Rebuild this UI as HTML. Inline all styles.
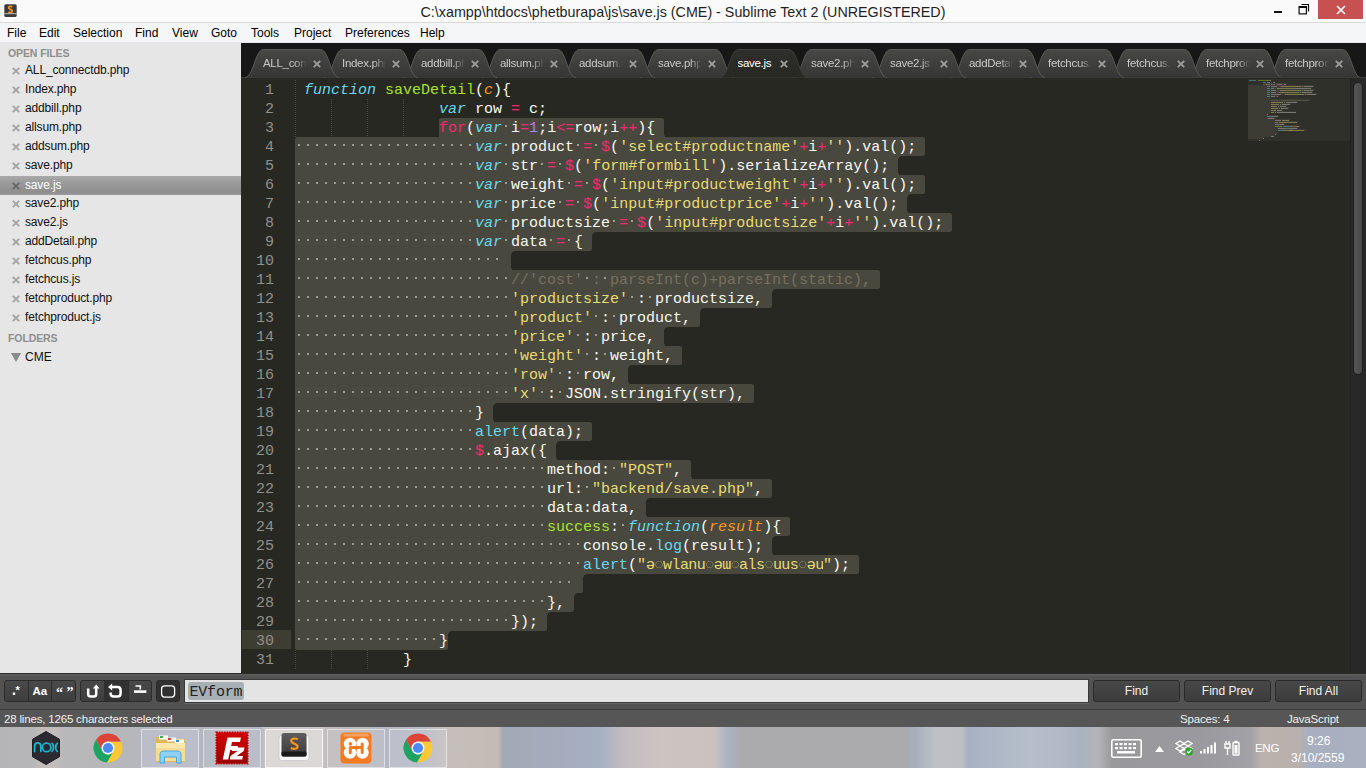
<!DOCTYPE html>
<html><head><meta charset="utf-8">
<style>
*{margin:0;padding:0;box-sizing:border-box}
html,body{width:1366px;height:768px;overflow:hidden;background:#272822;font-family:"Liberation Sans",sans-serif;position:relative}
svg{position:absolute;overflow:visible}
#title{position:absolute;left:0;top:0;width:1366px;height:23px;background:#fafafa;border-bottom:1px solid #d9d9d9}
#title .t{position:absolute;left:0;width:1366px;top:4px;text-align:center;font-size:14.3px;color:#1f1f1f;white-space:nowrap}
#menu{position:absolute;left:0;top:23px;width:1366px;height:20px;background:#f5f6f7;border-bottom:1px solid #e6e7e8}
.mi{position:absolute;top:3px;font-size:12px;color:#000}
#side{position:absolute;left:0;top:43px;width:241px;height:632px;background:#e6e6e6}
.sh{position:absolute;left:8px;font-size:10.5px;color:#8e8e8e;font-weight:bold;letter-spacing:-0.1px}
.fi{position:absolute;left:0;width:241px;height:19px;font-size:12px;color:#111;padding-left:25px;line-height:19px;letter-spacing:-0.15px;white-space:nowrap}
.fi.on{background:linear-gradient(#a9a9a9,#999 40%,#8e8e8e 85%,#9c9c9c);color:#fff}
#tabbar{position:absolute;left:241px;top:43px;width:1125px;height:34px;background:#171717}
.tab{position:absolute;top:49px;width:94px;height:29px}
.tab svg{left:0;top:0}
.tl{position:absolute;left:18px;top:8px;width:44px;overflow:hidden;white-space:nowrap;font-size:11.5px;color:#c8c8c8;letter-spacing:-0.3px;
 -webkit-mask-image:linear-gradient(90deg,#000 72%,transparent 100%);mask-image:linear-gradient(90deg,#000 72%,transparent 100%)}
.tab.act .tl{color:#fff;-webkit-mask-image:none;mask-image:none}
#editor{position:absolute;left:241px;top:77px;width:1125px;height:597px;background:#272822;overflow:hidden}
#codewrap{position:absolute;left:-241px;top:-77px;width:1366px;height:768px}
.ln{position:absolute;left:295px;height:19px;line-height:19px;font-family:"Liberation Mono",monospace;font-size:15px;color:#f8f8f2;white-space:pre}
.sel{position:absolute;height:19px;background:#49483e}
.ig{position:absolute;width:1px;background:repeating-linear-gradient(#4a4a41 0 1px,transparent 1px 2px)}
.dt{position:absolute;width:2px;height:2px;background:#9d9c8f}
.k{color:#66d9ef;font-style:italic}
.c{color:#f92672}
.o{color:#f92672}
.n{color:#ae81ff}
.s{color:#e6db74}
.f{color:#a6e22e}
.p{color:#fd971f;font-style:italic}
.b{color:#66d9ef}
.cm{color:#75715e}
.th{display:inline-block;width:177px;letter-spacing:-0.55px;overflow:hidden;vertical-align:top}
.th i{font-style:normal;opacity:.8}
.gn{position:absolute;left:241px;width:33px;height:19px;line-height:19px;text-align:right;font-family:"Liberation Mono",monospace;font-size:15px;color:#8f908a}
.gcur{position:absolute;left:242px;width:49px;height:19px;background:#3e3d32}
#minimap{position:absolute;left:1248px;top:79px;width:102px;height:62px;background:#2f302a}
.mm{position:absolute;height:1px;opacity:.38}
#sbtrack{position:absolute;left:1350px;top:77px;width:16px;height:598px;background:#282828;border-left:1px solid #222}
#sbthumb{position:absolute;left:1353px;top:82px;width:10px;height:293px;background:linear-gradient(90deg,#555,#4a4a4a);border-radius:5px;border:1px solid #1e1e1e}
#find{position:absolute;left:0;top:673px;width:1366px;height:37px;background:#525252;border-top:1px solid #2c2c2c;border-bottom:1px solid #3a3a3a;box-shadow:inset 0 2px 0 #5a5a5a}
.fb{position:absolute;height:22px;background:linear-gradient(#494949,#3e3e3e);border:1px solid #2b2b2b;border-radius:3px}
.fbt{position:absolute;top:680px;height:22px;background:linear-gradient(#484848,#3c3c3c);border:1px solid #2a2a2a;border-radius:3px;color:#f0f0f0;font-size:12px;text-align:center;line-height:20px}
.cell{position:absolute;top:0;height:20px;border-right:1px solid #2e2e2e}
.cell.on{background:#313131}
#input{position:absolute;left:184px;top:679px;width:905px;height:24px;background:#e4e4e4;border:1px solid #3a3a3a;box-shadow:0 1px 0 #666}
#input .q{position:absolute;left:3px;top:1.5px;height:18.5px;padding:0 1.5px;background:#a9b0b5;border-radius:3px;font-family:"Liberation Mono",monospace;font-size:15px;line-height:21px;color:#222;letter-spacing:-0.2px}
#status{position:absolute;left:0;top:710px;width:1366px;height:17px;background:#565656;color:#f0f0f0;font-size:11.5px}
#status span{position:absolute;top:3px;white-space:nowrap;letter-spacing:-0.18px}
#task{position:absolute;left:0;top:727px;width:1366px;height:41px;overflow:hidden;
 background:linear-gradient(90deg,#b5b5b7 0px,#b7b6b8 35px,#c2bdbb 40px,#c0bcbb 58px,#b8b7b9 64px,#b6b7bb 130px,#b3b7c0 141px,#b4b8c1 199px,#b1b5be 203px,#b3b7c0 261px,#c9c5c4 265px,#c9c5c4 323px,#bfbab9 327px,#bdb9b9 360px,#b3b8c2 385px,#b5bac5 420px,#c6bfbb 447px,#c5bab5 498px,#a3a8b4 503px,#a6b0c3 600px,#c3bdc0 625px,#cdc3c1 660px,#cbc1bf 715px,#a9b2c4 728px,#abaaad 742px,#abaaac 905px,#a7afbf 915px,#bec0c6 935px,#bdbfc5 962px,#a7b1c3 968px,#b6beca 1030px,#b2bac7 1060px,#a9b2c2 1080px,#b4b4b7 1098px,#99999c 1112px,#9a9a9e 1200px,#a2a1a5 1250px,#bbb2ae 1262px,#b9b0ad 1298px,#a7afc0 1310px,#a9b0c0 1366px)}
.tb{position:absolute;top:2px;height:39px;border:1px solid rgba(255,255,255,.5);background:rgba(235,238,245,.15)}
.tb.act{background:rgba(245,240,238,.45);border-color:rgba(255,255,255,.7)}
.tray{position:absolute;color:#fff;font-size:12px;white-space:nowrap}
</style></head><body>
<div id="title">
<svg style="left:3px;top:3px" width="15" height="15" viewBox="0 0 15 15"><rect x="0" y="0" width="15" height="15" rx="2.5" fill="#fff"/><rect x="1.3" y="1.3" width="12.4" height="12.6" rx="1.5" fill="#3b3b3b"/><rect x="1.3" y="10" width="12.4" height="1.2" fill="#aaa"/><path d="M9.3 3.8 C8 3 5.6 3.1 5.6 4.8 C5.6 6.5 9.3 6.2 9.3 8 C9.3 9.6 6.8 9.7 5.4 8.9" stroke="#f7941d" stroke-width="1.7" fill="none"/></svg>
<div class="t">C:\xampp\htdocs\phetburapa\js\save.js (CME) - Sublime Text 2 (UNREGISTERED)</div>
<div style="position:absolute;left:1274px;top:11px;width:8px;height:2px;background:#111"></div>
<svg style="left:1298px;top:3px" width="12" height="12" viewBox="0 0 12 12"><path d="M3.5 1.5 H10.5 V8.5" stroke="#111" stroke-width="1.2" fill="none"/><rect x="1.1" y="3.6" width="7.3" height="7.3" stroke="#111" stroke-width="1.2" fill="#fafafa"/><rect x="1" y="3.2" width="7.6" height="1.8" fill="#111"/></svg>
<div style="position:absolute;left:1318px;top:0;width:45px;height:19px;background:#c75050"></div>
<svg style="left:1336px;top:5px" width="10" height="10" viewBox="0 0 10 10"><path d="M1 1 L9 9 M9 1 L1 9" stroke="#fff" stroke-width="1.6"/></svg>
</div>
<div id="menu"><span class="mi" style="left:7px">File</span><span class="mi" style="left:39px">Edit</span><span class="mi" style="left:73px">Selection</span><span class="mi" style="left:135px">Find</span><span class="mi" style="left:172px">View</span><span class="mi" style="left:211px">Goto</span><span class="mi" style="left:251px">Tools</span><span class="mi" style="left:294px">Project</span><span class="mi" style="left:345px">Preferences</span><span class="mi" style="left:420px">Help</span></div>
<div id="side">
<div class="sh" style="top:4px">OPEN FILES</div>
<div style="position:absolute;left:0;top:-43px"><div class="fi" style="top:61px"><svg style="left:11.5px;top:5.5px" width="8" height="8" viewBox="0 0 8 8"><path d="M0.8 0.8 L7.2 7.2 M7.2 0.8 L0.8 7.2" stroke="#a3a3a3" stroke-width="1.9"/></svg>ALL_connectdb.php</div>
<div class="fi" style="top:80px"><svg style="left:11.5px;top:5.5px" width="8" height="8" viewBox="0 0 8 8"><path d="M0.8 0.8 L7.2 7.2 M7.2 0.8 L0.8 7.2" stroke="#a3a3a3" stroke-width="1.9"/></svg>Index.php</div>
<div class="fi" style="top:99px"><svg style="left:11.5px;top:5.5px" width="8" height="8" viewBox="0 0 8 8"><path d="M0.8 0.8 L7.2 7.2 M7.2 0.8 L0.8 7.2" stroke="#a3a3a3" stroke-width="1.9"/></svg>addbill.php</div>
<div class="fi" style="top:118px"><svg style="left:11.5px;top:5.5px" width="8" height="8" viewBox="0 0 8 8"><path d="M0.8 0.8 L7.2 7.2 M7.2 0.8 L0.8 7.2" stroke="#a3a3a3" stroke-width="1.9"/></svg>allsum.php</div>
<div class="fi" style="top:137px"><svg style="left:11.5px;top:5.5px" width="8" height="8" viewBox="0 0 8 8"><path d="M0.8 0.8 L7.2 7.2 M7.2 0.8 L0.8 7.2" stroke="#a3a3a3" stroke-width="1.9"/></svg>addsum.php</div>
<div class="fi" style="top:156px"><svg style="left:11.5px;top:5.5px" width="8" height="8" viewBox="0 0 8 8"><path d="M0.8 0.8 L7.2 7.2 M7.2 0.8 L0.8 7.2" stroke="#a3a3a3" stroke-width="1.9"/></svg>save.php</div>
<div class="fi on" style="top:176px"><svg style="left:11.5px;top:5.5px" width="8" height="8" viewBox="0 0 8 8"><path d="M0.8 0.8 L7.2 7.2 M7.2 0.8 L0.8 7.2" stroke="#666" stroke-width="1.9"/></svg>save.js</div>
<div class="fi" style="top:194px"><svg style="left:11.5px;top:5.5px" width="8" height="8" viewBox="0 0 8 8"><path d="M0.8 0.8 L7.2 7.2 M7.2 0.8 L0.8 7.2" stroke="#a3a3a3" stroke-width="1.9"/></svg>save2.php</div>
<div class="fi" style="top:213px"><svg style="left:11.5px;top:5.5px" width="8" height="8" viewBox="0 0 8 8"><path d="M0.8 0.8 L7.2 7.2 M7.2 0.8 L0.8 7.2" stroke="#a3a3a3" stroke-width="1.9"/></svg>save2.js</div>
<div class="fi" style="top:232px"><svg style="left:11.5px;top:5.5px" width="8" height="8" viewBox="0 0 8 8"><path d="M0.8 0.8 L7.2 7.2 M7.2 0.8 L0.8 7.2" stroke="#a3a3a3" stroke-width="1.9"/></svg>addDetail.php</div>
<div class="fi" style="top:251px"><svg style="left:11.5px;top:5.5px" width="8" height="8" viewBox="0 0 8 8"><path d="M0.8 0.8 L7.2 7.2 M7.2 0.8 L0.8 7.2" stroke="#a3a3a3" stroke-width="1.9"/></svg>fetchcus.php</div>
<div class="fi" style="top:270px"><svg style="left:11.5px;top:5.5px" width="8" height="8" viewBox="0 0 8 8"><path d="M0.8 0.8 L7.2 7.2 M7.2 0.8 L0.8 7.2" stroke="#a3a3a3" stroke-width="1.9"/></svg>fetchcus.js</div>
<div class="fi" style="top:289px"><svg style="left:11.5px;top:5.5px" width="8" height="8" viewBox="0 0 8 8"><path d="M0.8 0.8 L7.2 7.2 M7.2 0.8 L0.8 7.2" stroke="#a3a3a3" stroke-width="1.9"/></svg>fetchproduct.php</div>
<div class="fi" style="top:308px"><svg style="left:11.5px;top:5.5px" width="8" height="8" viewBox="0 0 8 8"><path d="M0.8 0.8 L7.2 7.2 M7.2 0.8 L0.8 7.2" stroke="#a3a3a3" stroke-width="1.9"/></svg>fetchproduct.js</div></div>
<div class="sh" style="top:288.5px">FOLDERS</div>
<svg style="left:11px;top:310px" width="10" height="9" viewBox="0 0 10 9"><path d="M0 0 H10 L5 9 Z" fill="#8a8a8a"/></svg>
<div class="fi" style="top:305px;letter-spacing:0">CME</div>
</div>
<div id="tabbar"></div><div style="position:absolute;left:241px;top:77px;width:1125px;height:1px;background:#3a3a37;z-index:30"></div>
<svg width="0" height="0" style="position:absolute"><defs><linearGradient id="tgi" x1="0" y1="0" x2="0" y2="1"><stop offset="0" stop-color="#474744"/><stop offset="1" stop-color="#363634"/></linearGradient><linearGradient id="tga" x1="0" y1="0" x2="0" y2="1"><stop offset="0" stop-color="#2f2f2b"/><stop offset="1" stop-color="#272822"/></linearGradient></defs></svg>
<div class="tab" style="left:245px;z-index:40"><svg width="94" height="29" viewBox="0 0 94 29"><path d="M0 28.5 C8.5 28.5 10 0.5 18.5 0.5 L75.5 0.5 C84 0.5 85.5 28.5 94 28.5 Z" fill="url(#tgi)"/><path d="M0 28.5 C8.5 28.5 10 0.5 18.5 0.5 L75.5 0.5 C84 0.5 85.5 28.5 94 28.5" fill="none" stroke="#5a5a56" stroke-width="1"/></svg><span class="tl">ALL_connectdb.php</span><svg style="left:68px;top:11px" width="8" height="8" viewBox="0 0 8 8"><path d="M0.8 0.8 L7.2 7.2 M7.2 0.8 L0.8 7.2" stroke="#9e9e9e" stroke-width="1.8"/></svg></div>
<div class="tab" style="left:324px;z-index:39"><svg width="94" height="29" viewBox="0 0 94 29"><path d="M0 28.5 C8.5 28.5 10 0.5 18.5 0.5 L75.5 0.5 C84 0.5 85.5 28.5 94 28.5 Z" fill="url(#tgi)"/><path d="M0 28.5 C8.5 28.5 10 0.5 18.5 0.5 L75.5 0.5 C84 0.5 85.5 28.5 94 28.5" fill="none" stroke="#5a5a56" stroke-width="1"/></svg><span class="tl">Index.php</span><svg style="left:68px;top:11px" width="8" height="8" viewBox="0 0 8 8"><path d="M0.8 0.8 L7.2 7.2 M7.2 0.8 L0.8 7.2" stroke="#9e9e9e" stroke-width="1.8"/></svg></div>
<div class="tab" style="left:403px;z-index:38"><svg width="94" height="29" viewBox="0 0 94 29"><path d="M0 28.5 C8.5 28.5 10 0.5 18.5 0.5 L75.5 0.5 C84 0.5 85.5 28.5 94 28.5 Z" fill="url(#tgi)"/><path d="M0 28.5 C8.5 28.5 10 0.5 18.5 0.5 L75.5 0.5 C84 0.5 85.5 28.5 94 28.5" fill="none" stroke="#5a5a56" stroke-width="1"/></svg><span class="tl">addbill.php</span><svg style="left:68px;top:11px" width="8" height="8" viewBox="0 0 8 8"><path d="M0.8 0.8 L7.2 7.2 M7.2 0.8 L0.8 7.2" stroke="#9e9e9e" stroke-width="1.8"/></svg></div>
<div class="tab" style="left:482px;z-index:37"><svg width="94" height="29" viewBox="0 0 94 29"><path d="M0 28.5 C8.5 28.5 10 0.5 18.5 0.5 L75.5 0.5 C84 0.5 85.5 28.5 94 28.5 Z" fill="url(#tgi)"/><path d="M0 28.5 C8.5 28.5 10 0.5 18.5 0.5 L75.5 0.5 C84 0.5 85.5 28.5 94 28.5" fill="none" stroke="#5a5a56" stroke-width="1"/></svg><span class="tl">allsum.php</span><svg style="left:68px;top:11px" width="8" height="8" viewBox="0 0 8 8"><path d="M0.8 0.8 L7.2 7.2 M7.2 0.8 L0.8 7.2" stroke="#9e9e9e" stroke-width="1.8"/></svg></div>
<div class="tab" style="left:561px;z-index:36"><svg width="94" height="29" viewBox="0 0 94 29"><path d="M0 28.5 C8.5 28.5 10 0.5 18.5 0.5 L75.5 0.5 C84 0.5 85.5 28.5 94 28.5 Z" fill="url(#tgi)"/><path d="M0 28.5 C8.5 28.5 10 0.5 18.5 0.5 L75.5 0.5 C84 0.5 85.5 28.5 94 28.5" fill="none" stroke="#5a5a56" stroke-width="1"/></svg><span class="tl">addsum.php</span><svg style="left:68px;top:11px" width="8" height="8" viewBox="0 0 8 8"><path d="M0.8 0.8 L7.2 7.2 M7.2 0.8 L0.8 7.2" stroke="#9e9e9e" stroke-width="1.8"/></svg></div>
<div class="tab" style="left:640px;z-index:35"><svg width="94" height="29" viewBox="0 0 94 29"><path d="M0 28.5 C8.5 28.5 10 0.5 18.5 0.5 L75.5 0.5 C84 0.5 85.5 28.5 94 28.5 Z" fill="url(#tgi)"/><path d="M0 28.5 C8.5 28.5 10 0.5 18.5 0.5 L75.5 0.5 C84 0.5 85.5 28.5 94 28.5" fill="none" stroke="#5a5a56" stroke-width="1"/></svg><span class="tl">save.php</span><svg style="left:68px;top:11px" width="8" height="8" viewBox="0 0 8 8"><path d="M0.8 0.8 L7.2 7.2 M7.2 0.8 L0.8 7.2" stroke="#9e9e9e" stroke-width="1.8"/></svg></div>
<div class="tab act" style="left:719.5px;z-index:50"><svg width="87.5" height="29" viewBox="0 0 87.5 29"><path d="M0 28.5 C8.5 28.5 10 0.5 18.5 0.5 L69.0 0.5 C77.5 0.5 79.0 28.5 87.5 28.5 Z" fill="url(#tga)"/><path d="M0 28.5 C8.5 28.5 10 0.5 18.5 0.5 L69.0 0.5 C77.5 0.5 79.0 28.5 87.5 28.5" fill="none" stroke="#3e3e3a" stroke-width="1"/></svg><span class="tl">save.js</span><svg style="left:60px;top:11px" width="8" height="8" viewBox="0 0 8 8"><path d="M0.8 0.8 L7.2 7.2 M7.2 0.8 L0.8 7.2" stroke="#9e9e9e" stroke-width="1.8"/></svg></div>
<div class="tab" style="left:793px;z-index:33"><svg width="94" height="29" viewBox="0 0 94 29"><path d="M0 28.5 C8.5 28.5 10 0.5 18.5 0.5 L75.5 0.5 C84 0.5 85.5 28.5 94 28.5 Z" fill="url(#tgi)"/><path d="M0 28.5 C8.5 28.5 10 0.5 18.5 0.5 L75.5 0.5 C84 0.5 85.5 28.5 94 28.5" fill="none" stroke="#5a5a56" stroke-width="1"/></svg><span class="tl">save2.php</span><svg style="left:68px;top:11px" width="8" height="8" viewBox="0 0 8 8"><path d="M0.8 0.8 L7.2 7.2 M7.2 0.8 L0.8 7.2" stroke="#9e9e9e" stroke-width="1.8"/></svg></div>
<div class="tab" style="left:872px;z-index:32"><svg width="94" height="29" viewBox="0 0 94 29"><path d="M0 28.5 C8.5 28.5 10 0.5 18.5 0.5 L75.5 0.5 C84 0.5 85.5 28.5 94 28.5 Z" fill="url(#tgi)"/><path d="M0 28.5 C8.5 28.5 10 0.5 18.5 0.5 L75.5 0.5 C84 0.5 85.5 28.5 94 28.5" fill="none" stroke="#5a5a56" stroke-width="1"/></svg><span class="tl">save2.js</span><svg style="left:68px;top:11px" width="8" height="8" viewBox="0 0 8 8"><path d="M0.8 0.8 L7.2 7.2 M7.2 0.8 L0.8 7.2" stroke="#9e9e9e" stroke-width="1.8"/></svg></div>
<div class="tab" style="left:951px;z-index:31"><svg width="94" height="29" viewBox="0 0 94 29"><path d="M0 28.5 C8.5 28.5 10 0.5 18.5 0.5 L75.5 0.5 C84 0.5 85.5 28.5 94 28.5 Z" fill="url(#tgi)"/><path d="M0 28.5 C8.5 28.5 10 0.5 18.5 0.5 L75.5 0.5 C84 0.5 85.5 28.5 94 28.5" fill="none" stroke="#5a5a56" stroke-width="1"/></svg><span class="tl">addDetail.php</span><svg style="left:68px;top:11px" width="8" height="8" viewBox="0 0 8 8"><path d="M0.8 0.8 L7.2 7.2 M7.2 0.8 L0.8 7.2" stroke="#9e9e9e" stroke-width="1.8"/></svg></div>
<div class="tab" style="left:1030px;z-index:30"><svg width="94" height="29" viewBox="0 0 94 29"><path d="M0 28.5 C8.5 28.5 10 0.5 18.5 0.5 L75.5 0.5 C84 0.5 85.5 28.5 94 28.5 Z" fill="url(#tgi)"/><path d="M0 28.5 C8.5 28.5 10 0.5 18.5 0.5 L75.5 0.5 C84 0.5 85.5 28.5 94 28.5" fill="none" stroke="#5a5a56" stroke-width="1"/></svg><span class="tl">fetchcus.php</span><svg style="left:68px;top:11px" width="8" height="8" viewBox="0 0 8 8"><path d="M0.8 0.8 L7.2 7.2 M7.2 0.8 L0.8 7.2" stroke="#9e9e9e" stroke-width="1.8"/></svg></div>
<div class="tab" style="left:1109px;z-index:29"><svg width="94" height="29" viewBox="0 0 94 29"><path d="M0 28.5 C8.5 28.5 10 0.5 18.5 0.5 L75.5 0.5 C84 0.5 85.5 28.5 94 28.5 Z" fill="url(#tgi)"/><path d="M0 28.5 C8.5 28.5 10 0.5 18.5 0.5 L75.5 0.5 C84 0.5 85.5 28.5 94 28.5" fill="none" stroke="#5a5a56" stroke-width="1"/></svg><span class="tl">fetchcus.js</span><svg style="left:68px;top:11px" width="8" height="8" viewBox="0 0 8 8"><path d="M0.8 0.8 L7.2 7.2 M7.2 0.8 L0.8 7.2" stroke="#9e9e9e" stroke-width="1.8"/></svg></div>
<div class="tab" style="left:1188px;z-index:28"><svg width="94" height="29" viewBox="0 0 94 29"><path d="M0 28.5 C8.5 28.5 10 0.5 18.5 0.5 L75.5 0.5 C84 0.5 85.5 28.5 94 28.5 Z" fill="url(#tgi)"/><path d="M0 28.5 C8.5 28.5 10 0.5 18.5 0.5 L75.5 0.5 C84 0.5 85.5 28.5 94 28.5" fill="none" stroke="#5a5a56" stroke-width="1"/></svg><span class="tl">fetchproduct.php</span><svg style="left:68px;top:11px" width="8" height="8" viewBox="0 0 8 8"><path d="M0.8 0.8 L7.2 7.2 M7.2 0.8 L0.8 7.2" stroke="#9e9e9e" stroke-width="1.8"/></svg></div>
<div class="tab" style="left:1267px;z-index:27"><svg width="94" height="29" viewBox="0 0 94 29"><path d="M0 28.5 C8.5 28.5 10 0.5 18.5 0.5 L75.5 0.5 C84 0.5 85.5 28.5 94 28.5 Z" fill="url(#tgi)"/><path d="M0 28.5 C8.5 28.5 10 0.5 18.5 0.5 L75.5 0.5 C84 0.5 85.5 28.5 94 28.5" fill="none" stroke="#5a5a56" stroke-width="1"/></svg><span class="tl">fetchproduct.js</span><svg style="left:68px;top:11px" width="8" height="8" viewBox="0 0 8 8"><path d="M0.8 0.8 L7.2 7.2 M7.2 0.8 L0.8 7.2" stroke="#9e9e9e" stroke-width="1.8"/></svg></div>
<div id="editor"><div id="codewrap">
<div class="gcur" style="top:630px"></div>
<div class="gn" style="top:81px">1</div>
<div class="gn" style="top:100px">2</div>
<div class="gn" style="top:119px">3</div>
<div class="gn" style="top:138px">4</div>
<div class="gn" style="top:157px">5</div>
<div class="gn" style="top:176px">6</div>
<div class="gn" style="top:195px">7</div>
<div class="gn" style="top:214px">8</div>
<div class="gn" style="top:233px">9</div>
<div class="gn" style="top:252px">10</div>
<div class="gn" style="top:271px">11</div>
<div class="gn" style="top:290px">12</div>
<div class="gn" style="top:309px">13</div>
<div class="gn" style="top:328px">14</div>
<div class="gn" style="top:347px">15</div>
<div class="gn" style="top:366px">16</div>
<div class="gn" style="top:385px">17</div>
<div class="gn" style="top:404px">18</div>
<div class="gn" style="top:423px">19</div>
<div class="gn" style="top:442px">20</div>
<div class="gn" style="top:461px">21</div>
<div class="gn" style="top:480px">22</div>
<div class="gn" style="top:499px">23</div>
<div class="gn" style="top:518px">24</div>
<div class="gn" style="top:537px">25</div>
<div class="gn" style="top:556px">26</div>
<div class="gn" style="top:575px">27</div>
<div class="gn" style="top:594px">28</div>
<div class="gn" style="top:613px">29</div>
<div class="gn" style="top:632px">30</div>
<div class="gn" style="top:651px">31</div>
<div class="gn" style="top:670px">32</div>
<div class="sel" style="left:439px;top:118px;width:225px;border-radius:2.5px 2.5px 0px 0px"></div>
<div class="sel" style="left:295px;top:137px;width:630px;border-radius:2.5px 2.5px 2.5px 0px"></div>
<div class="sel" style="left:295px;top:156px;width:603px;border-radius:0px 0px 0px 0px"></div>
<div class="sel" style="left:295px;top:175px;width:630px;border-radius:0px 2.5px 2.5px 0px"></div>
<div class="sel" style="left:295px;top:194px;width:612px;border-radius:0px 0px 0px 0px"></div>
<div class="sel" style="left:295px;top:213px;width:657px;border-radius:0px 2.5px 2.5px 0px"></div>
<div class="sel" style="left:295px;top:232px;width:297px;border-radius:0px 0px 2.5px 0px"></div>
<div class="sel" style="left:295px;top:251px;width:216px;border-radius:0px 0px 0px 0px"></div>
<div class="sel" style="left:295px;top:270px;width:585px;border-radius:0px 2.5px 2.5px 0px"></div>
<div class="sel" style="left:295px;top:289px;width:477px;border-radius:0px 0px 2.5px 0px"></div>
<div class="sel" style="left:295px;top:308px;width:405px;border-radius:0px 0px 2.5px 0px"></div>
<div class="sel" style="left:295px;top:327px;width:369px;border-radius:0px 0px 0px 0px"></div>
<div class="sel" style="left:295px;top:346px;width:387px;border-radius:0px 2.5px 2.5px 0px"></div>
<div class="sel" style="left:295px;top:365px;width:333px;border-radius:0px 0px 0px 0px"></div>
<div class="sel" style="left:295px;top:384px;width:459px;border-radius:0px 2.5px 2.5px 0px"></div>
<div class="sel" style="left:295px;top:403px;width:198px;border-radius:0px 0px 0px 0px"></div>
<div class="sel" style="left:295px;top:422px;width:297px;border-radius:0px 2.5px 2.5px 0px"></div>
<div class="sel" style="left:295px;top:441px;width:261px;border-radius:0px 0px 0px 0px"></div>
<div class="sel" style="left:295px;top:460px;width:396px;border-radius:0px 2.5px 0px 0px"></div>
<div class="sel" style="left:295px;top:479px;width:477px;border-radius:0px 2.5px 2.5px 0px"></div>
<div class="sel" style="left:295px;top:498px;width:351px;border-radius:0px 0px 0px 0px"></div>
<div class="sel" style="left:295px;top:517px;width:495px;border-radius:0px 2.5px 2.5px 0px"></div>
<div class="sel" style="left:295px;top:536px;width:477px;border-radius:0px 0px 0px 0px"></div>
<div class="sel" style="left:295px;top:555px;width:564px;border-radius:0px 2.5px 2.5px 0px"></div>
<div class="sel" style="left:295px;top:574px;width:288px;border-radius:0px 0px 2.5px 0px"></div>
<div class="sel" style="left:295px;top:593px;width:279px;border-radius:0px 0px 2.5px 0px"></div>
<div class="sel" style="left:295px;top:612px;width:252px;border-radius:0px 0px 2.5px 0px"></div>
<div class="sel" style="left:295px;top:631px;width:153px;border-radius:0px 0px 2.5px 2.5px"></div>
<div style="position:absolute;left:664px;top:134.5px;width:2.5px;height:2.5px;background:radial-gradient(circle at 100% 0, transparent 2.2px, #49483e 2.8px)"></div>
<div style="position:absolute;left:436.5px;top:134.5px;width:2.5px;height:2.5px;background:radial-gradient(circle at 0 0, transparent 2.2px, #49483e 2.8px)"></div>
<div style="position:absolute;left:898px;top:156px;width:2.5px;height:2.5px;background:radial-gradient(circle at 100% 100%, transparent 2.2px, #49483e 2.8px)"></div>
<div style="position:absolute;left:898px;top:172.5px;width:2.5px;height:2.5px;background:radial-gradient(circle at 100% 0, transparent 2.2px, #49483e 2.8px)"></div>
<div style="position:absolute;left:907px;top:194px;width:2.5px;height:2.5px;background:radial-gradient(circle at 100% 100%, transparent 2.2px, #49483e 2.8px)"></div>
<div style="position:absolute;left:907px;top:210.5px;width:2.5px;height:2.5px;background:radial-gradient(circle at 100% 0, transparent 2.2px, #49483e 2.8px)"></div>
<div style="position:absolute;left:592px;top:232px;width:2.5px;height:2.5px;background:radial-gradient(circle at 100% 100%, transparent 2.2px, #49483e 2.8px)"></div>
<div style="position:absolute;left:511px;top:251px;width:2.5px;height:2.5px;background:radial-gradient(circle at 100% 100%, transparent 2.2px, #49483e 2.8px)"></div>
<div style="position:absolute;left:511px;top:267.5px;width:2.5px;height:2.5px;background:radial-gradient(circle at 100% 0, transparent 2.2px, #49483e 2.8px)"></div>
<div style="position:absolute;left:772px;top:289px;width:2.5px;height:2.5px;background:radial-gradient(circle at 100% 100%, transparent 2.2px, #49483e 2.8px)"></div>
<div style="position:absolute;left:700px;top:308px;width:2.5px;height:2.5px;background:radial-gradient(circle at 100% 100%, transparent 2.2px, #49483e 2.8px)"></div>
<div style="position:absolute;left:664px;top:327px;width:2.5px;height:2.5px;background:radial-gradient(circle at 100% 100%, transparent 2.2px, #49483e 2.8px)"></div>
<div style="position:absolute;left:664px;top:343.5px;width:2.5px;height:2.5px;background:radial-gradient(circle at 100% 0, transparent 2.2px, #49483e 2.8px)"></div>
<div style="position:absolute;left:628px;top:365px;width:2.5px;height:2.5px;background:radial-gradient(circle at 100% 100%, transparent 2.2px, #49483e 2.8px)"></div>
<div style="position:absolute;left:628px;top:381.5px;width:2.5px;height:2.5px;background:radial-gradient(circle at 100% 0, transparent 2.2px, #49483e 2.8px)"></div>
<div style="position:absolute;left:493px;top:403px;width:2.5px;height:2.5px;background:radial-gradient(circle at 100% 100%, transparent 2.2px, #49483e 2.8px)"></div>
<div style="position:absolute;left:493px;top:419.5px;width:2.5px;height:2.5px;background:radial-gradient(circle at 100% 0, transparent 2.2px, #49483e 2.8px)"></div>
<div style="position:absolute;left:556px;top:441px;width:2.5px;height:2.5px;background:radial-gradient(circle at 100% 100%, transparent 2.2px, #49483e 2.8px)"></div>
<div style="position:absolute;left:556px;top:457.5px;width:2.5px;height:2.5px;background:radial-gradient(circle at 100% 0, transparent 2.2px, #49483e 2.8px)"></div>
<div style="position:absolute;left:691px;top:476.5px;width:2.5px;height:2.5px;background:radial-gradient(circle at 100% 0, transparent 2.2px, #49483e 2.8px)"></div>
<div style="position:absolute;left:646px;top:498px;width:2.5px;height:2.5px;background:radial-gradient(circle at 100% 100%, transparent 2.2px, #49483e 2.8px)"></div>
<div style="position:absolute;left:646px;top:514.5px;width:2.5px;height:2.5px;background:radial-gradient(circle at 100% 0, transparent 2.2px, #49483e 2.8px)"></div>
<div style="position:absolute;left:772px;top:536px;width:2.5px;height:2.5px;background:radial-gradient(circle at 100% 100%, transparent 2.2px, #49483e 2.8px)"></div>
<div style="position:absolute;left:772px;top:552.5px;width:2.5px;height:2.5px;background:radial-gradient(circle at 100% 0, transparent 2.2px, #49483e 2.8px)"></div>
<div style="position:absolute;left:583px;top:574px;width:2.5px;height:2.5px;background:radial-gradient(circle at 100% 100%, transparent 2.2px, #49483e 2.8px)"></div>
<div style="position:absolute;left:574px;top:593px;width:2.5px;height:2.5px;background:radial-gradient(circle at 100% 100%, transparent 2.2px, #49483e 2.8px)"></div>
<div style="position:absolute;left:547px;top:612px;width:2.5px;height:2.5px;background:radial-gradient(circle at 100% 100%, transparent 2.2px, #49483e 2.8px)"></div>
<div style="position:absolute;left:448px;top:631px;width:2.5px;height:2.5px;background:radial-gradient(circle at 100% 100%, transparent 2.2px, #49483e 2.8px)"></div>
<div class="ig" style="left:295px;top:80px;height:57px"></div>
<div class="ig" style="left:331px;top:99px;height:38px"></div>
<div class="ig" style="left:367px;top:99px;height:38px"></div>
<div class="ig" style="left:403px;top:99px;height:38px"></div>
<div class="ig" style="left:295px;top:650px;height:19px"></div>
<div class="ig" style="left:331px;top:650px;height:19px"></div>
<div class="ig" style="left:367px;top:650px;height:19px"></div>
<div class="ln" style="top:81px"> <span class="k">function</span> <span class="f">saveDetail</span>(<span class="p">c</span>){</div>
<div class="ln" style="top:100px">                <span class="k">var</span> row <span class="o">=</span> c;</div>
<div class="ln" style="top:119px">                <span class="c">for</span>(<span class="k">var</span> i<span class="o">=</span><span class="n">1</span>;i<span class="o">&lt;=</span>row;i<span class="o">++</span>){</div>
<div class="ln" style="top:138px">                    <span class="k">var</span> product <span class="o">=</span> <span class="o">$</span>(<span class="s">&#x27;select#productname&#x27;</span><span class="o">+</span>i<span class="o">+</span><span class="s">&#x27;&#x27;</span>).val();</div>
<div class="ln" style="top:157px">                    <span class="k">var</span> str <span class="o">=</span> <span class="o">$</span>(<span class="s">&#x27;form#formbill&#x27;</span>).serializeArray();</div>
<div class="ln" style="top:176px">                    <span class="k">var</span> weight <span class="o">=</span> <span class="o">$</span>(<span class="s">&#x27;input#productweight&#x27;</span><span class="o">+</span>i<span class="o">+</span><span class="s">&#x27;&#x27;</span>).val();</div>
<div class="ln" style="top:195px">                    <span class="k">var</span> price <span class="o">=</span> <span class="o">$</span>(<span class="s">&#x27;input#productprice&#x27;</span><span class="o">+</span>i<span class="o">+</span><span class="s">&#x27;&#x27;</span>).val();</div>
<div class="ln" style="top:214px">                    <span class="k">var</span> productsize <span class="o">=</span> <span class="o">$</span>(<span class="s">&#x27;input#productsize&#x27;</span><span class="o">+</span>i<span class="o">+</span><span class="s">&#x27;&#x27;</span>).val();</div>
<div class="ln" style="top:233px">                    <span class="k">var</span> data <span class="o">=</span> {</div>
<div class="ln" style="top:252px">                       </div>
<div class="ln" style="top:271px">                        <span class="cm">//&#x27;cost&#x27; : parseInt(c)+parseInt(static),</span></div>
<div class="ln" style="top:290px">                        <span class="s">&#x27;productsize&#x27;</span> : productsize,</div>
<div class="ln" style="top:309px">                        <span class="s">&#x27;product&#x27;</span> : product,</div>
<div class="ln" style="top:328px">                        <span class="s">&#x27;price&#x27;</span> : price,</div>
<div class="ln" style="top:347px">                        <span class="s">&#x27;weight&#x27;</span> : weight,</div>
<div class="ln" style="top:366px">                        <span class="s">&#x27;row&#x27;</span> : row,</div>
<div class="ln" style="top:385px">                        <span class="s">&#x27;x&#x27;</span> : JSON.stringify(str),</div>
<div class="ln" style="top:404px">                    }</div>
<div class="ln" style="top:423px">                    <span class="b">alert</span>(data);</div>
<div class="ln" style="top:442px">                    <span class="o">$</span>.ajax({</div>
<div class="ln" style="top:461px">                            method: <span class="s">&quot;POST&quot;</span>,</div>
<div class="ln" style="top:480px">                            url: <span class="s">&quot;backend/save.php&quot;</span>,</div>
<div class="ln" style="top:499px">                            data<span class="d">:</span>data,</div>
<div class="ln" style="top:518px">                            <span class="f">success</span>: <span class="k">function</span>(<span class="p">result</span>){</div>
<div class="ln" style="top:537px">                                console.<span class="b">log</span>(result);</div>
<div class="ln" style="top:556px">                                <span class="b">alert</span>(<span class="s">"</span><span class="s th">ə<i>◌</i>wlanu<i>◌</i>əɯ<i>◌</i>als<i>◌</i>uus<i>◌</i>əu</span><span class="s">"</span>);</div>
<div class="ln" style="top:575px">                               </div>
<div class="ln" style="top:594px">                            },</div>
<div class="ln" style="top:613px">                        });</div>
<div class="ln" style="top:632px">                }</div>
<div class="ln" style="top:651px">            }</div>
<i class="dt" style="left:505px;top:125px"></i>
<i class="dt" style="left:298px;top:144px"></i>
<i class="dt" style="left:307px;top:144px"></i>
<i class="dt" style="left:316px;top:144px"></i>
<i class="dt" style="left:325px;top:144px"></i>
<i class="dt" style="left:334px;top:144px"></i>
<i class="dt" style="left:343px;top:144px"></i>
<i class="dt" style="left:352px;top:144px"></i>
<i class="dt" style="left:361px;top:144px"></i>
<i class="dt" style="left:370px;top:144px"></i>
<i class="dt" style="left:379px;top:144px"></i>
<i class="dt" style="left:388px;top:144px"></i>
<i class="dt" style="left:397px;top:144px"></i>
<i class="dt" style="left:406px;top:144px"></i>
<i class="dt" style="left:415px;top:144px"></i>
<i class="dt" style="left:424px;top:144px"></i>
<i class="dt" style="left:433px;top:144px"></i>
<i class="dt" style="left:442px;top:144px"></i>
<i class="dt" style="left:451px;top:144px"></i>
<i class="dt" style="left:460px;top:144px"></i>
<i class="dt" style="left:469px;top:144px"></i>
<i class="dt" style="left:505px;top:144px"></i>
<i class="dt" style="left:577px;top:144px"></i>
<i class="dt" style="left:595px;top:144px"></i>
<i class="dt" style="left:298px;top:163px"></i>
<i class="dt" style="left:307px;top:163px"></i>
<i class="dt" style="left:316px;top:163px"></i>
<i class="dt" style="left:325px;top:163px"></i>
<i class="dt" style="left:334px;top:163px"></i>
<i class="dt" style="left:343px;top:163px"></i>
<i class="dt" style="left:352px;top:163px"></i>
<i class="dt" style="left:361px;top:163px"></i>
<i class="dt" style="left:370px;top:163px"></i>
<i class="dt" style="left:379px;top:163px"></i>
<i class="dt" style="left:388px;top:163px"></i>
<i class="dt" style="left:397px;top:163px"></i>
<i class="dt" style="left:406px;top:163px"></i>
<i class="dt" style="left:415px;top:163px"></i>
<i class="dt" style="left:424px;top:163px"></i>
<i class="dt" style="left:433px;top:163px"></i>
<i class="dt" style="left:442px;top:163px"></i>
<i class="dt" style="left:451px;top:163px"></i>
<i class="dt" style="left:460px;top:163px"></i>
<i class="dt" style="left:469px;top:163px"></i>
<i class="dt" style="left:505px;top:163px"></i>
<i class="dt" style="left:541px;top:163px"></i>
<i class="dt" style="left:559px;top:163px"></i>
<i class="dt" style="left:298px;top:182px"></i>
<i class="dt" style="left:307px;top:182px"></i>
<i class="dt" style="left:316px;top:182px"></i>
<i class="dt" style="left:325px;top:182px"></i>
<i class="dt" style="left:334px;top:182px"></i>
<i class="dt" style="left:343px;top:182px"></i>
<i class="dt" style="left:352px;top:182px"></i>
<i class="dt" style="left:361px;top:182px"></i>
<i class="dt" style="left:370px;top:182px"></i>
<i class="dt" style="left:379px;top:182px"></i>
<i class="dt" style="left:388px;top:182px"></i>
<i class="dt" style="left:397px;top:182px"></i>
<i class="dt" style="left:406px;top:182px"></i>
<i class="dt" style="left:415px;top:182px"></i>
<i class="dt" style="left:424px;top:182px"></i>
<i class="dt" style="left:433px;top:182px"></i>
<i class="dt" style="left:442px;top:182px"></i>
<i class="dt" style="left:451px;top:182px"></i>
<i class="dt" style="left:460px;top:182px"></i>
<i class="dt" style="left:469px;top:182px"></i>
<i class="dt" style="left:505px;top:182px"></i>
<i class="dt" style="left:568px;top:182px"></i>
<i class="dt" style="left:586px;top:182px"></i>
<i class="dt" style="left:298px;top:201px"></i>
<i class="dt" style="left:307px;top:201px"></i>
<i class="dt" style="left:316px;top:201px"></i>
<i class="dt" style="left:325px;top:201px"></i>
<i class="dt" style="left:334px;top:201px"></i>
<i class="dt" style="left:343px;top:201px"></i>
<i class="dt" style="left:352px;top:201px"></i>
<i class="dt" style="left:361px;top:201px"></i>
<i class="dt" style="left:370px;top:201px"></i>
<i class="dt" style="left:379px;top:201px"></i>
<i class="dt" style="left:388px;top:201px"></i>
<i class="dt" style="left:397px;top:201px"></i>
<i class="dt" style="left:406px;top:201px"></i>
<i class="dt" style="left:415px;top:201px"></i>
<i class="dt" style="left:424px;top:201px"></i>
<i class="dt" style="left:433px;top:201px"></i>
<i class="dt" style="left:442px;top:201px"></i>
<i class="dt" style="left:451px;top:201px"></i>
<i class="dt" style="left:460px;top:201px"></i>
<i class="dt" style="left:469px;top:201px"></i>
<i class="dt" style="left:505px;top:201px"></i>
<i class="dt" style="left:559px;top:201px"></i>
<i class="dt" style="left:577px;top:201px"></i>
<i class="dt" style="left:298px;top:220px"></i>
<i class="dt" style="left:307px;top:220px"></i>
<i class="dt" style="left:316px;top:220px"></i>
<i class="dt" style="left:325px;top:220px"></i>
<i class="dt" style="left:334px;top:220px"></i>
<i class="dt" style="left:343px;top:220px"></i>
<i class="dt" style="left:352px;top:220px"></i>
<i class="dt" style="left:361px;top:220px"></i>
<i class="dt" style="left:370px;top:220px"></i>
<i class="dt" style="left:379px;top:220px"></i>
<i class="dt" style="left:388px;top:220px"></i>
<i class="dt" style="left:397px;top:220px"></i>
<i class="dt" style="left:406px;top:220px"></i>
<i class="dt" style="left:415px;top:220px"></i>
<i class="dt" style="left:424px;top:220px"></i>
<i class="dt" style="left:433px;top:220px"></i>
<i class="dt" style="left:442px;top:220px"></i>
<i class="dt" style="left:451px;top:220px"></i>
<i class="dt" style="left:460px;top:220px"></i>
<i class="dt" style="left:469px;top:220px"></i>
<i class="dt" style="left:505px;top:220px"></i>
<i class="dt" style="left:613px;top:220px"></i>
<i class="dt" style="left:631px;top:220px"></i>
<i class="dt" style="left:298px;top:239px"></i>
<i class="dt" style="left:307px;top:239px"></i>
<i class="dt" style="left:316px;top:239px"></i>
<i class="dt" style="left:325px;top:239px"></i>
<i class="dt" style="left:334px;top:239px"></i>
<i class="dt" style="left:343px;top:239px"></i>
<i class="dt" style="left:352px;top:239px"></i>
<i class="dt" style="left:361px;top:239px"></i>
<i class="dt" style="left:370px;top:239px"></i>
<i class="dt" style="left:379px;top:239px"></i>
<i class="dt" style="left:388px;top:239px"></i>
<i class="dt" style="left:397px;top:239px"></i>
<i class="dt" style="left:406px;top:239px"></i>
<i class="dt" style="left:415px;top:239px"></i>
<i class="dt" style="left:424px;top:239px"></i>
<i class="dt" style="left:433px;top:239px"></i>
<i class="dt" style="left:442px;top:239px"></i>
<i class="dt" style="left:451px;top:239px"></i>
<i class="dt" style="left:460px;top:239px"></i>
<i class="dt" style="left:469px;top:239px"></i>
<i class="dt" style="left:505px;top:239px"></i>
<i class="dt" style="left:550px;top:239px"></i>
<i class="dt" style="left:568px;top:239px"></i>
<i class="dt" style="left:298px;top:258px"></i>
<i class="dt" style="left:307px;top:258px"></i>
<i class="dt" style="left:316px;top:258px"></i>
<i class="dt" style="left:325px;top:258px"></i>
<i class="dt" style="left:334px;top:258px"></i>
<i class="dt" style="left:343px;top:258px"></i>
<i class="dt" style="left:352px;top:258px"></i>
<i class="dt" style="left:361px;top:258px"></i>
<i class="dt" style="left:370px;top:258px"></i>
<i class="dt" style="left:379px;top:258px"></i>
<i class="dt" style="left:388px;top:258px"></i>
<i class="dt" style="left:397px;top:258px"></i>
<i class="dt" style="left:406px;top:258px"></i>
<i class="dt" style="left:415px;top:258px"></i>
<i class="dt" style="left:424px;top:258px"></i>
<i class="dt" style="left:433px;top:258px"></i>
<i class="dt" style="left:442px;top:258px"></i>
<i class="dt" style="left:451px;top:258px"></i>
<i class="dt" style="left:460px;top:258px"></i>
<i class="dt" style="left:469px;top:258px"></i>
<i class="dt" style="left:478px;top:258px"></i>
<i class="dt" style="left:487px;top:258px"></i>
<i class="dt" style="left:496px;top:258px"></i>
<i class="dt" style="left:298px;top:277px"></i>
<i class="dt" style="left:307px;top:277px"></i>
<i class="dt" style="left:316px;top:277px"></i>
<i class="dt" style="left:325px;top:277px"></i>
<i class="dt" style="left:334px;top:277px"></i>
<i class="dt" style="left:343px;top:277px"></i>
<i class="dt" style="left:352px;top:277px"></i>
<i class="dt" style="left:361px;top:277px"></i>
<i class="dt" style="left:370px;top:277px"></i>
<i class="dt" style="left:379px;top:277px"></i>
<i class="dt" style="left:388px;top:277px"></i>
<i class="dt" style="left:397px;top:277px"></i>
<i class="dt" style="left:406px;top:277px"></i>
<i class="dt" style="left:415px;top:277px"></i>
<i class="dt" style="left:424px;top:277px"></i>
<i class="dt" style="left:433px;top:277px"></i>
<i class="dt" style="left:442px;top:277px"></i>
<i class="dt" style="left:451px;top:277px"></i>
<i class="dt" style="left:460px;top:277px"></i>
<i class="dt" style="left:469px;top:277px"></i>
<i class="dt" style="left:478px;top:277px"></i>
<i class="dt" style="left:487px;top:277px"></i>
<i class="dt" style="left:496px;top:277px"></i>
<i class="dt" style="left:505px;top:277px"></i>
<i class="dt" style="left:586px;top:277px"></i>
<i class="dt" style="left:604px;top:277px"></i>
<i class="dt" style="left:298px;top:296px"></i>
<i class="dt" style="left:307px;top:296px"></i>
<i class="dt" style="left:316px;top:296px"></i>
<i class="dt" style="left:325px;top:296px"></i>
<i class="dt" style="left:334px;top:296px"></i>
<i class="dt" style="left:343px;top:296px"></i>
<i class="dt" style="left:352px;top:296px"></i>
<i class="dt" style="left:361px;top:296px"></i>
<i class="dt" style="left:370px;top:296px"></i>
<i class="dt" style="left:379px;top:296px"></i>
<i class="dt" style="left:388px;top:296px"></i>
<i class="dt" style="left:397px;top:296px"></i>
<i class="dt" style="left:406px;top:296px"></i>
<i class="dt" style="left:415px;top:296px"></i>
<i class="dt" style="left:424px;top:296px"></i>
<i class="dt" style="left:433px;top:296px"></i>
<i class="dt" style="left:442px;top:296px"></i>
<i class="dt" style="left:451px;top:296px"></i>
<i class="dt" style="left:460px;top:296px"></i>
<i class="dt" style="left:469px;top:296px"></i>
<i class="dt" style="left:478px;top:296px"></i>
<i class="dt" style="left:487px;top:296px"></i>
<i class="dt" style="left:496px;top:296px"></i>
<i class="dt" style="left:505px;top:296px"></i>
<i class="dt" style="left:631px;top:296px"></i>
<i class="dt" style="left:649px;top:296px"></i>
<i class="dt" style="left:298px;top:315px"></i>
<i class="dt" style="left:307px;top:315px"></i>
<i class="dt" style="left:316px;top:315px"></i>
<i class="dt" style="left:325px;top:315px"></i>
<i class="dt" style="left:334px;top:315px"></i>
<i class="dt" style="left:343px;top:315px"></i>
<i class="dt" style="left:352px;top:315px"></i>
<i class="dt" style="left:361px;top:315px"></i>
<i class="dt" style="left:370px;top:315px"></i>
<i class="dt" style="left:379px;top:315px"></i>
<i class="dt" style="left:388px;top:315px"></i>
<i class="dt" style="left:397px;top:315px"></i>
<i class="dt" style="left:406px;top:315px"></i>
<i class="dt" style="left:415px;top:315px"></i>
<i class="dt" style="left:424px;top:315px"></i>
<i class="dt" style="left:433px;top:315px"></i>
<i class="dt" style="left:442px;top:315px"></i>
<i class="dt" style="left:451px;top:315px"></i>
<i class="dt" style="left:460px;top:315px"></i>
<i class="dt" style="left:469px;top:315px"></i>
<i class="dt" style="left:478px;top:315px"></i>
<i class="dt" style="left:487px;top:315px"></i>
<i class="dt" style="left:496px;top:315px"></i>
<i class="dt" style="left:505px;top:315px"></i>
<i class="dt" style="left:595px;top:315px"></i>
<i class="dt" style="left:613px;top:315px"></i>
<i class="dt" style="left:298px;top:334px"></i>
<i class="dt" style="left:307px;top:334px"></i>
<i class="dt" style="left:316px;top:334px"></i>
<i class="dt" style="left:325px;top:334px"></i>
<i class="dt" style="left:334px;top:334px"></i>
<i class="dt" style="left:343px;top:334px"></i>
<i class="dt" style="left:352px;top:334px"></i>
<i class="dt" style="left:361px;top:334px"></i>
<i class="dt" style="left:370px;top:334px"></i>
<i class="dt" style="left:379px;top:334px"></i>
<i class="dt" style="left:388px;top:334px"></i>
<i class="dt" style="left:397px;top:334px"></i>
<i class="dt" style="left:406px;top:334px"></i>
<i class="dt" style="left:415px;top:334px"></i>
<i class="dt" style="left:424px;top:334px"></i>
<i class="dt" style="left:433px;top:334px"></i>
<i class="dt" style="left:442px;top:334px"></i>
<i class="dt" style="left:451px;top:334px"></i>
<i class="dt" style="left:460px;top:334px"></i>
<i class="dt" style="left:469px;top:334px"></i>
<i class="dt" style="left:478px;top:334px"></i>
<i class="dt" style="left:487px;top:334px"></i>
<i class="dt" style="left:496px;top:334px"></i>
<i class="dt" style="left:505px;top:334px"></i>
<i class="dt" style="left:577px;top:334px"></i>
<i class="dt" style="left:595px;top:334px"></i>
<i class="dt" style="left:298px;top:353px"></i>
<i class="dt" style="left:307px;top:353px"></i>
<i class="dt" style="left:316px;top:353px"></i>
<i class="dt" style="left:325px;top:353px"></i>
<i class="dt" style="left:334px;top:353px"></i>
<i class="dt" style="left:343px;top:353px"></i>
<i class="dt" style="left:352px;top:353px"></i>
<i class="dt" style="left:361px;top:353px"></i>
<i class="dt" style="left:370px;top:353px"></i>
<i class="dt" style="left:379px;top:353px"></i>
<i class="dt" style="left:388px;top:353px"></i>
<i class="dt" style="left:397px;top:353px"></i>
<i class="dt" style="left:406px;top:353px"></i>
<i class="dt" style="left:415px;top:353px"></i>
<i class="dt" style="left:424px;top:353px"></i>
<i class="dt" style="left:433px;top:353px"></i>
<i class="dt" style="left:442px;top:353px"></i>
<i class="dt" style="left:451px;top:353px"></i>
<i class="dt" style="left:460px;top:353px"></i>
<i class="dt" style="left:469px;top:353px"></i>
<i class="dt" style="left:478px;top:353px"></i>
<i class="dt" style="left:487px;top:353px"></i>
<i class="dt" style="left:496px;top:353px"></i>
<i class="dt" style="left:505px;top:353px"></i>
<i class="dt" style="left:586px;top:353px"></i>
<i class="dt" style="left:604px;top:353px"></i>
<i class="dt" style="left:298px;top:372px"></i>
<i class="dt" style="left:307px;top:372px"></i>
<i class="dt" style="left:316px;top:372px"></i>
<i class="dt" style="left:325px;top:372px"></i>
<i class="dt" style="left:334px;top:372px"></i>
<i class="dt" style="left:343px;top:372px"></i>
<i class="dt" style="left:352px;top:372px"></i>
<i class="dt" style="left:361px;top:372px"></i>
<i class="dt" style="left:370px;top:372px"></i>
<i class="dt" style="left:379px;top:372px"></i>
<i class="dt" style="left:388px;top:372px"></i>
<i class="dt" style="left:397px;top:372px"></i>
<i class="dt" style="left:406px;top:372px"></i>
<i class="dt" style="left:415px;top:372px"></i>
<i class="dt" style="left:424px;top:372px"></i>
<i class="dt" style="left:433px;top:372px"></i>
<i class="dt" style="left:442px;top:372px"></i>
<i class="dt" style="left:451px;top:372px"></i>
<i class="dt" style="left:460px;top:372px"></i>
<i class="dt" style="left:469px;top:372px"></i>
<i class="dt" style="left:478px;top:372px"></i>
<i class="dt" style="left:487px;top:372px"></i>
<i class="dt" style="left:496px;top:372px"></i>
<i class="dt" style="left:505px;top:372px"></i>
<i class="dt" style="left:559px;top:372px"></i>
<i class="dt" style="left:577px;top:372px"></i>
<i class="dt" style="left:298px;top:391px"></i>
<i class="dt" style="left:307px;top:391px"></i>
<i class="dt" style="left:316px;top:391px"></i>
<i class="dt" style="left:325px;top:391px"></i>
<i class="dt" style="left:334px;top:391px"></i>
<i class="dt" style="left:343px;top:391px"></i>
<i class="dt" style="left:352px;top:391px"></i>
<i class="dt" style="left:361px;top:391px"></i>
<i class="dt" style="left:370px;top:391px"></i>
<i class="dt" style="left:379px;top:391px"></i>
<i class="dt" style="left:388px;top:391px"></i>
<i class="dt" style="left:397px;top:391px"></i>
<i class="dt" style="left:406px;top:391px"></i>
<i class="dt" style="left:415px;top:391px"></i>
<i class="dt" style="left:424px;top:391px"></i>
<i class="dt" style="left:433px;top:391px"></i>
<i class="dt" style="left:442px;top:391px"></i>
<i class="dt" style="left:451px;top:391px"></i>
<i class="dt" style="left:460px;top:391px"></i>
<i class="dt" style="left:469px;top:391px"></i>
<i class="dt" style="left:478px;top:391px"></i>
<i class="dt" style="left:487px;top:391px"></i>
<i class="dt" style="left:496px;top:391px"></i>
<i class="dt" style="left:505px;top:391px"></i>
<i class="dt" style="left:541px;top:391px"></i>
<i class="dt" style="left:559px;top:391px"></i>
<i class="dt" style="left:298px;top:410px"></i>
<i class="dt" style="left:307px;top:410px"></i>
<i class="dt" style="left:316px;top:410px"></i>
<i class="dt" style="left:325px;top:410px"></i>
<i class="dt" style="left:334px;top:410px"></i>
<i class="dt" style="left:343px;top:410px"></i>
<i class="dt" style="left:352px;top:410px"></i>
<i class="dt" style="left:361px;top:410px"></i>
<i class="dt" style="left:370px;top:410px"></i>
<i class="dt" style="left:379px;top:410px"></i>
<i class="dt" style="left:388px;top:410px"></i>
<i class="dt" style="left:397px;top:410px"></i>
<i class="dt" style="left:406px;top:410px"></i>
<i class="dt" style="left:415px;top:410px"></i>
<i class="dt" style="left:424px;top:410px"></i>
<i class="dt" style="left:433px;top:410px"></i>
<i class="dt" style="left:442px;top:410px"></i>
<i class="dt" style="left:451px;top:410px"></i>
<i class="dt" style="left:460px;top:410px"></i>
<i class="dt" style="left:469px;top:410px"></i>
<i class="dt" style="left:298px;top:429px"></i>
<i class="dt" style="left:307px;top:429px"></i>
<i class="dt" style="left:316px;top:429px"></i>
<i class="dt" style="left:325px;top:429px"></i>
<i class="dt" style="left:334px;top:429px"></i>
<i class="dt" style="left:343px;top:429px"></i>
<i class="dt" style="left:352px;top:429px"></i>
<i class="dt" style="left:361px;top:429px"></i>
<i class="dt" style="left:370px;top:429px"></i>
<i class="dt" style="left:379px;top:429px"></i>
<i class="dt" style="left:388px;top:429px"></i>
<i class="dt" style="left:397px;top:429px"></i>
<i class="dt" style="left:406px;top:429px"></i>
<i class="dt" style="left:415px;top:429px"></i>
<i class="dt" style="left:424px;top:429px"></i>
<i class="dt" style="left:433px;top:429px"></i>
<i class="dt" style="left:442px;top:429px"></i>
<i class="dt" style="left:451px;top:429px"></i>
<i class="dt" style="left:460px;top:429px"></i>
<i class="dt" style="left:469px;top:429px"></i>
<i class="dt" style="left:298px;top:448px"></i>
<i class="dt" style="left:307px;top:448px"></i>
<i class="dt" style="left:316px;top:448px"></i>
<i class="dt" style="left:325px;top:448px"></i>
<i class="dt" style="left:334px;top:448px"></i>
<i class="dt" style="left:343px;top:448px"></i>
<i class="dt" style="left:352px;top:448px"></i>
<i class="dt" style="left:361px;top:448px"></i>
<i class="dt" style="left:370px;top:448px"></i>
<i class="dt" style="left:379px;top:448px"></i>
<i class="dt" style="left:388px;top:448px"></i>
<i class="dt" style="left:397px;top:448px"></i>
<i class="dt" style="left:406px;top:448px"></i>
<i class="dt" style="left:415px;top:448px"></i>
<i class="dt" style="left:424px;top:448px"></i>
<i class="dt" style="left:433px;top:448px"></i>
<i class="dt" style="left:442px;top:448px"></i>
<i class="dt" style="left:451px;top:448px"></i>
<i class="dt" style="left:460px;top:448px"></i>
<i class="dt" style="left:469px;top:448px"></i>
<i class="dt" style="left:298px;top:467px"></i>
<i class="dt" style="left:307px;top:467px"></i>
<i class="dt" style="left:316px;top:467px"></i>
<i class="dt" style="left:325px;top:467px"></i>
<i class="dt" style="left:334px;top:467px"></i>
<i class="dt" style="left:343px;top:467px"></i>
<i class="dt" style="left:352px;top:467px"></i>
<i class="dt" style="left:361px;top:467px"></i>
<i class="dt" style="left:370px;top:467px"></i>
<i class="dt" style="left:379px;top:467px"></i>
<i class="dt" style="left:388px;top:467px"></i>
<i class="dt" style="left:397px;top:467px"></i>
<i class="dt" style="left:406px;top:467px"></i>
<i class="dt" style="left:415px;top:467px"></i>
<i class="dt" style="left:424px;top:467px"></i>
<i class="dt" style="left:433px;top:467px"></i>
<i class="dt" style="left:442px;top:467px"></i>
<i class="dt" style="left:451px;top:467px"></i>
<i class="dt" style="left:460px;top:467px"></i>
<i class="dt" style="left:469px;top:467px"></i>
<i class="dt" style="left:478px;top:467px"></i>
<i class="dt" style="left:487px;top:467px"></i>
<i class="dt" style="left:496px;top:467px"></i>
<i class="dt" style="left:505px;top:467px"></i>
<i class="dt" style="left:514px;top:467px"></i>
<i class="dt" style="left:523px;top:467px"></i>
<i class="dt" style="left:532px;top:467px"></i>
<i class="dt" style="left:541px;top:467px"></i>
<i class="dt" style="left:613px;top:467px"></i>
<i class="dt" style="left:298px;top:486px"></i>
<i class="dt" style="left:307px;top:486px"></i>
<i class="dt" style="left:316px;top:486px"></i>
<i class="dt" style="left:325px;top:486px"></i>
<i class="dt" style="left:334px;top:486px"></i>
<i class="dt" style="left:343px;top:486px"></i>
<i class="dt" style="left:352px;top:486px"></i>
<i class="dt" style="left:361px;top:486px"></i>
<i class="dt" style="left:370px;top:486px"></i>
<i class="dt" style="left:379px;top:486px"></i>
<i class="dt" style="left:388px;top:486px"></i>
<i class="dt" style="left:397px;top:486px"></i>
<i class="dt" style="left:406px;top:486px"></i>
<i class="dt" style="left:415px;top:486px"></i>
<i class="dt" style="left:424px;top:486px"></i>
<i class="dt" style="left:433px;top:486px"></i>
<i class="dt" style="left:442px;top:486px"></i>
<i class="dt" style="left:451px;top:486px"></i>
<i class="dt" style="left:460px;top:486px"></i>
<i class="dt" style="left:469px;top:486px"></i>
<i class="dt" style="left:478px;top:486px"></i>
<i class="dt" style="left:487px;top:486px"></i>
<i class="dt" style="left:496px;top:486px"></i>
<i class="dt" style="left:505px;top:486px"></i>
<i class="dt" style="left:514px;top:486px"></i>
<i class="dt" style="left:523px;top:486px"></i>
<i class="dt" style="left:532px;top:486px"></i>
<i class="dt" style="left:541px;top:486px"></i>
<i class="dt" style="left:586px;top:486px"></i>
<i class="dt" style="left:298px;top:505px"></i>
<i class="dt" style="left:307px;top:505px"></i>
<i class="dt" style="left:316px;top:505px"></i>
<i class="dt" style="left:325px;top:505px"></i>
<i class="dt" style="left:334px;top:505px"></i>
<i class="dt" style="left:343px;top:505px"></i>
<i class="dt" style="left:352px;top:505px"></i>
<i class="dt" style="left:361px;top:505px"></i>
<i class="dt" style="left:370px;top:505px"></i>
<i class="dt" style="left:379px;top:505px"></i>
<i class="dt" style="left:388px;top:505px"></i>
<i class="dt" style="left:397px;top:505px"></i>
<i class="dt" style="left:406px;top:505px"></i>
<i class="dt" style="left:415px;top:505px"></i>
<i class="dt" style="left:424px;top:505px"></i>
<i class="dt" style="left:433px;top:505px"></i>
<i class="dt" style="left:442px;top:505px"></i>
<i class="dt" style="left:451px;top:505px"></i>
<i class="dt" style="left:460px;top:505px"></i>
<i class="dt" style="left:469px;top:505px"></i>
<i class="dt" style="left:478px;top:505px"></i>
<i class="dt" style="left:487px;top:505px"></i>
<i class="dt" style="left:496px;top:505px"></i>
<i class="dt" style="left:505px;top:505px"></i>
<i class="dt" style="left:514px;top:505px"></i>
<i class="dt" style="left:523px;top:505px"></i>
<i class="dt" style="left:532px;top:505px"></i>
<i class="dt" style="left:541px;top:505px"></i>
<i class="dt" style="left:298px;top:524px"></i>
<i class="dt" style="left:307px;top:524px"></i>
<i class="dt" style="left:316px;top:524px"></i>
<i class="dt" style="left:325px;top:524px"></i>
<i class="dt" style="left:334px;top:524px"></i>
<i class="dt" style="left:343px;top:524px"></i>
<i class="dt" style="left:352px;top:524px"></i>
<i class="dt" style="left:361px;top:524px"></i>
<i class="dt" style="left:370px;top:524px"></i>
<i class="dt" style="left:379px;top:524px"></i>
<i class="dt" style="left:388px;top:524px"></i>
<i class="dt" style="left:397px;top:524px"></i>
<i class="dt" style="left:406px;top:524px"></i>
<i class="dt" style="left:415px;top:524px"></i>
<i class="dt" style="left:424px;top:524px"></i>
<i class="dt" style="left:433px;top:524px"></i>
<i class="dt" style="left:442px;top:524px"></i>
<i class="dt" style="left:451px;top:524px"></i>
<i class="dt" style="left:460px;top:524px"></i>
<i class="dt" style="left:469px;top:524px"></i>
<i class="dt" style="left:478px;top:524px"></i>
<i class="dt" style="left:487px;top:524px"></i>
<i class="dt" style="left:496px;top:524px"></i>
<i class="dt" style="left:505px;top:524px"></i>
<i class="dt" style="left:514px;top:524px"></i>
<i class="dt" style="left:523px;top:524px"></i>
<i class="dt" style="left:532px;top:524px"></i>
<i class="dt" style="left:541px;top:524px"></i>
<i class="dt" style="left:622px;top:524px"></i>
<i class="dt" style="left:298px;top:543px"></i>
<i class="dt" style="left:307px;top:543px"></i>
<i class="dt" style="left:316px;top:543px"></i>
<i class="dt" style="left:325px;top:543px"></i>
<i class="dt" style="left:334px;top:543px"></i>
<i class="dt" style="left:343px;top:543px"></i>
<i class="dt" style="left:352px;top:543px"></i>
<i class="dt" style="left:361px;top:543px"></i>
<i class="dt" style="left:370px;top:543px"></i>
<i class="dt" style="left:379px;top:543px"></i>
<i class="dt" style="left:388px;top:543px"></i>
<i class="dt" style="left:397px;top:543px"></i>
<i class="dt" style="left:406px;top:543px"></i>
<i class="dt" style="left:415px;top:543px"></i>
<i class="dt" style="left:424px;top:543px"></i>
<i class="dt" style="left:433px;top:543px"></i>
<i class="dt" style="left:442px;top:543px"></i>
<i class="dt" style="left:451px;top:543px"></i>
<i class="dt" style="left:460px;top:543px"></i>
<i class="dt" style="left:469px;top:543px"></i>
<i class="dt" style="left:478px;top:543px"></i>
<i class="dt" style="left:487px;top:543px"></i>
<i class="dt" style="left:496px;top:543px"></i>
<i class="dt" style="left:505px;top:543px"></i>
<i class="dt" style="left:514px;top:543px"></i>
<i class="dt" style="left:523px;top:543px"></i>
<i class="dt" style="left:532px;top:543px"></i>
<i class="dt" style="left:541px;top:543px"></i>
<i class="dt" style="left:550px;top:543px"></i>
<i class="dt" style="left:559px;top:543px"></i>
<i class="dt" style="left:568px;top:543px"></i>
<i class="dt" style="left:577px;top:543px"></i>
<i class="dt" style="left:298px;top:562px"></i>
<i class="dt" style="left:307px;top:562px"></i>
<i class="dt" style="left:316px;top:562px"></i>
<i class="dt" style="left:325px;top:562px"></i>
<i class="dt" style="left:334px;top:562px"></i>
<i class="dt" style="left:343px;top:562px"></i>
<i class="dt" style="left:352px;top:562px"></i>
<i class="dt" style="left:361px;top:562px"></i>
<i class="dt" style="left:370px;top:562px"></i>
<i class="dt" style="left:379px;top:562px"></i>
<i class="dt" style="left:388px;top:562px"></i>
<i class="dt" style="left:397px;top:562px"></i>
<i class="dt" style="left:406px;top:562px"></i>
<i class="dt" style="left:415px;top:562px"></i>
<i class="dt" style="left:424px;top:562px"></i>
<i class="dt" style="left:433px;top:562px"></i>
<i class="dt" style="left:442px;top:562px"></i>
<i class="dt" style="left:451px;top:562px"></i>
<i class="dt" style="left:460px;top:562px"></i>
<i class="dt" style="left:469px;top:562px"></i>
<i class="dt" style="left:478px;top:562px"></i>
<i class="dt" style="left:487px;top:562px"></i>
<i class="dt" style="left:496px;top:562px"></i>
<i class="dt" style="left:505px;top:562px"></i>
<i class="dt" style="left:514px;top:562px"></i>
<i class="dt" style="left:523px;top:562px"></i>
<i class="dt" style="left:532px;top:562px"></i>
<i class="dt" style="left:541px;top:562px"></i>
<i class="dt" style="left:550px;top:562px"></i>
<i class="dt" style="left:559px;top:562px"></i>
<i class="dt" style="left:568px;top:562px"></i>
<i class="dt" style="left:577px;top:562px"></i>
<i class="dt" style="left:298px;top:581px"></i>
<i class="dt" style="left:307px;top:581px"></i>
<i class="dt" style="left:316px;top:581px"></i>
<i class="dt" style="left:325px;top:581px"></i>
<i class="dt" style="left:334px;top:581px"></i>
<i class="dt" style="left:343px;top:581px"></i>
<i class="dt" style="left:352px;top:581px"></i>
<i class="dt" style="left:361px;top:581px"></i>
<i class="dt" style="left:370px;top:581px"></i>
<i class="dt" style="left:379px;top:581px"></i>
<i class="dt" style="left:388px;top:581px"></i>
<i class="dt" style="left:397px;top:581px"></i>
<i class="dt" style="left:406px;top:581px"></i>
<i class="dt" style="left:415px;top:581px"></i>
<i class="dt" style="left:424px;top:581px"></i>
<i class="dt" style="left:433px;top:581px"></i>
<i class="dt" style="left:442px;top:581px"></i>
<i class="dt" style="left:451px;top:581px"></i>
<i class="dt" style="left:460px;top:581px"></i>
<i class="dt" style="left:469px;top:581px"></i>
<i class="dt" style="left:478px;top:581px"></i>
<i class="dt" style="left:487px;top:581px"></i>
<i class="dt" style="left:496px;top:581px"></i>
<i class="dt" style="left:505px;top:581px"></i>
<i class="dt" style="left:514px;top:581px"></i>
<i class="dt" style="left:523px;top:581px"></i>
<i class="dt" style="left:532px;top:581px"></i>
<i class="dt" style="left:541px;top:581px"></i>
<i class="dt" style="left:550px;top:581px"></i>
<i class="dt" style="left:559px;top:581px"></i>
<i class="dt" style="left:568px;top:581px"></i>
<i class="dt" style="left:298px;top:600px"></i>
<i class="dt" style="left:307px;top:600px"></i>
<i class="dt" style="left:316px;top:600px"></i>
<i class="dt" style="left:325px;top:600px"></i>
<i class="dt" style="left:334px;top:600px"></i>
<i class="dt" style="left:343px;top:600px"></i>
<i class="dt" style="left:352px;top:600px"></i>
<i class="dt" style="left:361px;top:600px"></i>
<i class="dt" style="left:370px;top:600px"></i>
<i class="dt" style="left:379px;top:600px"></i>
<i class="dt" style="left:388px;top:600px"></i>
<i class="dt" style="left:397px;top:600px"></i>
<i class="dt" style="left:406px;top:600px"></i>
<i class="dt" style="left:415px;top:600px"></i>
<i class="dt" style="left:424px;top:600px"></i>
<i class="dt" style="left:433px;top:600px"></i>
<i class="dt" style="left:442px;top:600px"></i>
<i class="dt" style="left:451px;top:600px"></i>
<i class="dt" style="left:460px;top:600px"></i>
<i class="dt" style="left:469px;top:600px"></i>
<i class="dt" style="left:478px;top:600px"></i>
<i class="dt" style="left:487px;top:600px"></i>
<i class="dt" style="left:496px;top:600px"></i>
<i class="dt" style="left:505px;top:600px"></i>
<i class="dt" style="left:514px;top:600px"></i>
<i class="dt" style="left:523px;top:600px"></i>
<i class="dt" style="left:532px;top:600px"></i>
<i class="dt" style="left:541px;top:600px"></i>
<i class="dt" style="left:298px;top:619px"></i>
<i class="dt" style="left:307px;top:619px"></i>
<i class="dt" style="left:316px;top:619px"></i>
<i class="dt" style="left:325px;top:619px"></i>
<i class="dt" style="left:334px;top:619px"></i>
<i class="dt" style="left:343px;top:619px"></i>
<i class="dt" style="left:352px;top:619px"></i>
<i class="dt" style="left:361px;top:619px"></i>
<i class="dt" style="left:370px;top:619px"></i>
<i class="dt" style="left:379px;top:619px"></i>
<i class="dt" style="left:388px;top:619px"></i>
<i class="dt" style="left:397px;top:619px"></i>
<i class="dt" style="left:406px;top:619px"></i>
<i class="dt" style="left:415px;top:619px"></i>
<i class="dt" style="left:424px;top:619px"></i>
<i class="dt" style="left:433px;top:619px"></i>
<i class="dt" style="left:442px;top:619px"></i>
<i class="dt" style="left:451px;top:619px"></i>
<i class="dt" style="left:460px;top:619px"></i>
<i class="dt" style="left:469px;top:619px"></i>
<i class="dt" style="left:478px;top:619px"></i>
<i class="dt" style="left:487px;top:619px"></i>
<i class="dt" style="left:496px;top:619px"></i>
<i class="dt" style="left:505px;top:619px"></i>
<i class="dt" style="left:298px;top:638px"></i>
<i class="dt" style="left:307px;top:638px"></i>
<i class="dt" style="left:316px;top:638px"></i>
<i class="dt" style="left:325px;top:638px"></i>
<i class="dt" style="left:334px;top:638px"></i>
<i class="dt" style="left:343px;top:638px"></i>
<i class="dt" style="left:352px;top:638px"></i>
<i class="dt" style="left:361px;top:638px"></i>
<i class="dt" style="left:370px;top:638px"></i>
<i class="dt" style="left:379px;top:638px"></i>
<i class="dt" style="left:388px;top:638px"></i>
<i class="dt" style="left:397px;top:638px"></i>
<i class="dt" style="left:406px;top:638px"></i>
<i class="dt" style="left:415px;top:638px"></i>
<i class="dt" style="left:424px;top:638px"></i>
<i class="dt" style="left:433px;top:638px"></i>
</div></div>
<div id="minimap"><div style="position:absolute;left:15.2px;top:4px;width:23.8px;height:2px;background:#3d3c34"></div>
<div style="position:absolute;left:0.0px;top:6px;width:66.5px;height:2px;background:#3d3c34"></div>
<div style="position:absolute;left:0.0px;top:8px;width:63.6px;height:2px;background:#3d3c34"></div>
<div style="position:absolute;left:0.0px;top:10px;width:66.5px;height:2px;background:#3d3c34"></div>
<div style="position:absolute;left:0.0px;top:12px;width:64.6px;height:2px;background:#3d3c34"></div>
<div style="position:absolute;left:0.0px;top:14px;width:69.3px;height:2px;background:#3d3c34"></div>
<div style="position:absolute;left:0.0px;top:16px;width:31.3px;height:2px;background:#3d3c34"></div>
<div style="position:absolute;left:0.0px;top:18px;width:22.8px;height:2px;background:#3d3c34"></div>
<div style="position:absolute;left:0.0px;top:20px;width:61.8px;height:2px;background:#3d3c34"></div>
<div style="position:absolute;left:0.0px;top:22px;width:50.3px;height:2px;background:#3d3c34"></div>
<div style="position:absolute;left:0.0px;top:24px;width:42.8px;height:2px;background:#3d3c34"></div>
<div style="position:absolute;left:0.0px;top:26px;width:38.9px;height:2px;background:#3d3c34"></div>
<div style="position:absolute;left:0.0px;top:28px;width:40.9px;height:2px;background:#3d3c34"></div>
<div style="position:absolute;left:0.0px;top:30px;width:35.1px;height:2px;background:#3d3c34"></div>
<div style="position:absolute;left:0.0px;top:32px;width:48.4px;height:2px;background:#3d3c34"></div>
<div style="position:absolute;left:0.0px;top:34px;width:20.9px;height:2px;background:#3d3c34"></div>
<div style="position:absolute;left:0.0px;top:36px;width:31.3px;height:2px;background:#3d3c34"></div>
<div style="position:absolute;left:0.0px;top:38px;width:27.5px;height:2px;background:#3d3c34"></div>
<div style="position:absolute;left:0.0px;top:40px;width:41.8px;height:2px;background:#3d3c34"></div>
<div style="position:absolute;left:0.0px;top:42px;width:50.3px;height:2px;background:#3d3c34"></div>
<div style="position:absolute;left:0.0px;top:44px;width:37.0px;height:2px;background:#3d3c34"></div>
<div style="position:absolute;left:0.0px;top:46px;width:52.2px;height:2px;background:#3d3c34"></div>
<div style="position:absolute;left:0.0px;top:48px;width:50.3px;height:2px;background:#3d3c34"></div>
<div style="position:absolute;left:0.0px;top:50px;width:58.9px;height:2px;background:#3d3c34"></div>
<div style="position:absolute;left:0.0px;top:52px;width:30.4px;height:2px;background:#3d3c34"></div>
<div style="position:absolute;left:0.0px;top:54px;width:29.4px;height:2px;background:#3d3c34"></div>
<div style="position:absolute;left:0.0px;top:56px;width:26.6px;height:2px;background:#3d3c34"></div>
<div style="position:absolute;left:0.0px;top:58px;width:16.1px;height:2px;background:#3d3c34"></div>
<div class="mm" style="left:0.9px;top:1px;width:7.6px;background:#66d9ef"></div>
<div class="mm" style="left:9.5px;top:1px;width:9.5px;background:#a6e22e"></div>
<div class="mm" style="left:19.0px;top:1px;width:0.9px;background:#d8d8d0"></div>
<div class="mm" style="left:19.9px;top:1px;width:0.9px;background:#fd971f"></div>
<div class="mm" style="left:20.9px;top:1px;width:1.9px;background:#d8d8d0"></div>
<div class="mm" style="left:15.2px;top:3px;width:2.8px;background:#66d9ef"></div>
<div class="mm" style="left:19.0px;top:3px;width:2.8px;background:#d8d8d0"></div>
<div class="mm" style="left:22.8px;top:3px;width:0.9px;background:#f92672"></div>
<div class="mm" style="left:24.7px;top:3px;width:1.9px;background:#d8d8d0"></div>
<div class="mm" style="left:15.2px;top:5px;width:2.8px;background:#f92672"></div>
<div class="mm" style="left:18.1px;top:5px;width:0.9px;background:#d8d8d0"></div>
<div class="mm" style="left:19.0px;top:5px;width:2.8px;background:#66d9ef"></div>
<div class="mm" style="left:22.8px;top:5px;width:0.9px;background:#d8d8d0"></div>
<div class="mm" style="left:23.8px;top:5px;width:0.9px;background:#f92672"></div>
<div class="mm" style="left:24.7px;top:5px;width:0.9px;background:#ae81ff"></div>
<div class="mm" style="left:25.6px;top:5px;width:1.9px;background:#d8d8d0"></div>
<div class="mm" style="left:27.5px;top:5px;width:1.9px;background:#f92672"></div>
<div class="mm" style="left:29.4px;top:5px;width:4.8px;background:#d8d8d0"></div>
<div class="mm" style="left:34.2px;top:5px;width:1.9px;background:#f92672"></div>
<div class="mm" style="left:36.1px;top:5px;width:1.9px;background:#d8d8d0"></div>
<div class="mm" style="left:19.0px;top:7px;width:2.8px;background:#66d9ef"></div>
<div class="mm" style="left:22.8px;top:7px;width:6.6px;background:#d8d8d0"></div>
<div class="mm" style="left:30.4px;top:7px;width:0.9px;background:#f92672"></div>
<div class="mm" style="left:32.3px;top:7px;width:0.9px;background:#f92672"></div>
<div class="mm" style="left:33.2px;top:7px;width:0.9px;background:#d8d8d0"></div>
<div class="mm" style="left:34.2px;top:7px;width:19.0px;background:#e6db74"></div>
<div class="mm" style="left:53.2px;top:7px;width:0.9px;background:#f92672"></div>
<div class="mm" style="left:54.1px;top:7px;width:0.9px;background:#d8d8d0"></div>
<div class="mm" style="left:55.1px;top:7px;width:0.9px;background:#f92672"></div>
<div class="mm" style="left:56.0px;top:7px;width:1.9px;background:#e6db74"></div>
<div class="mm" style="left:57.9px;top:7px;width:7.6px;background:#d8d8d0"></div>
<div class="mm" style="left:19.0px;top:9px;width:2.8px;background:#66d9ef"></div>
<div class="mm" style="left:22.8px;top:9px;width:2.8px;background:#d8d8d0"></div>
<div class="mm" style="left:26.6px;top:9px;width:0.9px;background:#f92672"></div>
<div class="mm" style="left:28.5px;top:9px;width:0.9px;background:#f92672"></div>
<div class="mm" style="left:29.4px;top:9px;width:0.9px;background:#d8d8d0"></div>
<div class="mm" style="left:30.4px;top:9px;width:14.2px;background:#e6db74"></div>
<div class="mm" style="left:44.6px;top:9px;width:18.1px;background:#d8d8d0"></div>
<div class="mm" style="left:19.0px;top:11px;width:2.8px;background:#66d9ef"></div>
<div class="mm" style="left:22.8px;top:11px;width:5.7px;background:#d8d8d0"></div>
<div class="mm" style="left:29.4px;top:11px;width:0.9px;background:#f92672"></div>
<div class="mm" style="left:31.3px;top:11px;width:0.9px;background:#f92672"></div>
<div class="mm" style="left:32.3px;top:11px;width:0.9px;background:#d8d8d0"></div>
<div class="mm" style="left:33.2px;top:11px;width:19.9px;background:#e6db74"></div>
<div class="mm" style="left:53.2px;top:11px;width:0.9px;background:#f92672"></div>
<div class="mm" style="left:54.1px;top:11px;width:0.9px;background:#d8d8d0"></div>
<div class="mm" style="left:55.1px;top:11px;width:0.9px;background:#f92672"></div>
<div class="mm" style="left:56.0px;top:11px;width:1.9px;background:#e6db74"></div>
<div class="mm" style="left:57.9px;top:11px;width:7.6px;background:#d8d8d0"></div>
<div class="mm" style="left:19.0px;top:13px;width:2.8px;background:#66d9ef"></div>
<div class="mm" style="left:22.8px;top:13px;width:4.8px;background:#d8d8d0"></div>
<div class="mm" style="left:28.5px;top:13px;width:0.9px;background:#f92672"></div>
<div class="mm" style="left:30.4px;top:13px;width:0.9px;background:#f92672"></div>
<div class="mm" style="left:31.3px;top:13px;width:0.9px;background:#d8d8d0"></div>
<div class="mm" style="left:32.3px;top:13px;width:19.0px;background:#e6db74"></div>
<div class="mm" style="left:51.3px;top:13px;width:0.9px;background:#f92672"></div>
<div class="mm" style="left:52.2px;top:13px;width:0.9px;background:#d8d8d0"></div>
<div class="mm" style="left:53.2px;top:13px;width:0.9px;background:#f92672"></div>
<div class="mm" style="left:54.1px;top:13px;width:1.9px;background:#e6db74"></div>
<div class="mm" style="left:56.0px;top:13px;width:7.6px;background:#d8d8d0"></div>
<div class="mm" style="left:19.0px;top:15px;width:2.8px;background:#66d9ef"></div>
<div class="mm" style="left:22.8px;top:15px;width:10.4px;background:#d8d8d0"></div>
<div class="mm" style="left:34.2px;top:15px;width:0.9px;background:#f92672"></div>
<div class="mm" style="left:36.1px;top:15px;width:0.9px;background:#f92672"></div>
<div class="mm" style="left:37.0px;top:15px;width:0.9px;background:#d8d8d0"></div>
<div class="mm" style="left:38.0px;top:15px;width:18.1px;background:#e6db74"></div>
<div class="mm" style="left:56.0px;top:15px;width:0.9px;background:#f92672"></div>
<div class="mm" style="left:57.0px;top:15px;width:0.9px;background:#d8d8d0"></div>
<div class="mm" style="left:57.9px;top:15px;width:0.9px;background:#f92672"></div>
<div class="mm" style="left:58.9px;top:15px;width:1.9px;background:#e6db74"></div>
<div class="mm" style="left:60.8px;top:15px;width:7.6px;background:#d8d8d0"></div>
<div class="mm" style="left:19.0px;top:17px;width:2.8px;background:#66d9ef"></div>
<div class="mm" style="left:22.8px;top:17px;width:3.8px;background:#d8d8d0"></div>
<div class="mm" style="left:27.5px;top:17px;width:0.9px;background:#f92672"></div>
<div class="mm" style="left:29.4px;top:17px;width:0.9px;background:#d8d8d0"></div>
<div class="mm" style="left:22.8px;top:21px;width:7.6px;background:#75715e"></div>
<div class="mm" style="left:31.3px;top:21px;width:0.9px;background:#75715e"></div>
<div class="mm" style="left:33.2px;top:21px;width:27.5px;background:#75715e"></div>
<div class="mm" style="left:22.8px;top:23px;width:12.3px;background:#e6db74"></div>
<div class="mm" style="left:36.1px;top:23px;width:0.9px;background:#d8d8d0"></div>
<div class="mm" style="left:38.0px;top:23px;width:11.4px;background:#d8d8d0"></div>
<div class="mm" style="left:22.8px;top:25px;width:8.5px;background:#e6db74"></div>
<div class="mm" style="left:32.3px;top:25px;width:0.9px;background:#d8d8d0"></div>
<div class="mm" style="left:34.2px;top:25px;width:7.6px;background:#d8d8d0"></div>
<div class="mm" style="left:22.8px;top:27px;width:6.6px;background:#e6db74"></div>
<div class="mm" style="left:30.4px;top:27px;width:0.9px;background:#d8d8d0"></div>
<div class="mm" style="left:32.3px;top:27px;width:5.7px;background:#d8d8d0"></div>
<div class="mm" style="left:22.8px;top:29px;width:7.6px;background:#e6db74"></div>
<div class="mm" style="left:31.3px;top:29px;width:0.9px;background:#d8d8d0"></div>
<div class="mm" style="left:33.2px;top:29px;width:6.6px;background:#d8d8d0"></div>
<div class="mm" style="left:22.8px;top:31px;width:4.8px;background:#e6db74"></div>
<div class="mm" style="left:28.5px;top:31px;width:0.9px;background:#d8d8d0"></div>
<div class="mm" style="left:30.4px;top:31px;width:3.8px;background:#d8d8d0"></div>
<div class="mm" style="left:22.8px;top:33px;width:2.8px;background:#e6db74"></div>
<div class="mm" style="left:26.6px;top:33px;width:0.9px;background:#d8d8d0"></div>
<div class="mm" style="left:28.5px;top:33px;width:19.0px;background:#d8d8d0"></div>
<div class="mm" style="left:19.0px;top:35px;width:0.9px;background:#d8d8d0"></div>
<div class="mm" style="left:19.0px;top:37px;width:4.8px;background:#66d9ef"></div>
<div class="mm" style="left:23.8px;top:37px;width:6.6px;background:#d8d8d0"></div>
<div class="mm" style="left:19.0px;top:39px;width:0.9px;background:#f92672"></div>
<div class="mm" style="left:19.9px;top:39px;width:6.6px;background:#d8d8d0"></div>
<div class="mm" style="left:26.6px;top:41px;width:6.6px;background:#d8d8d0"></div>
<div class="mm" style="left:34.2px;top:41px;width:5.7px;background:#e6db74"></div>
<div class="mm" style="left:39.9px;top:41px;width:0.9px;background:#d8d8d0"></div>
<div class="mm" style="left:26.6px;top:43px;width:3.8px;background:#d8d8d0"></div>
<div class="mm" style="left:31.3px;top:43px;width:17.1px;background:#e6db74"></div>
<div class="mm" style="left:48.4px;top:43px;width:0.9px;background:#d8d8d0"></div>
<div class="mm" style="left:26.6px;top:45px;width:3.8px;background:#d8d8d0"></div>
<div class="mm" style="left:30.4px;top:45px;width:0.9px;background:#d8d8d0"></div>
<div class="mm" style="left:31.3px;top:45px;width:4.8px;background:#d8d8d0"></div>
<div class="mm" style="left:26.6px;top:47px;width:6.6px;background:#a6e22e"></div>
<div class="mm" style="left:33.2px;top:47px;width:0.9px;background:#d8d8d0"></div>
<div class="mm" style="left:35.1px;top:47px;width:7.6px;background:#66d9ef"></div>
<div class="mm" style="left:42.8px;top:47px;width:0.9px;background:#d8d8d0"></div>
<div class="mm" style="left:43.7px;top:47px;width:5.7px;background:#fd971f"></div>
<div class="mm" style="left:49.4px;top:47px;width:1.9px;background:#d8d8d0"></div>
<div class="mm" style="left:30.4px;top:49px;width:7.6px;background:#d8d8d0"></div>
<div class="mm" style="left:38.0px;top:49px;width:2.8px;background:#66d9ef"></div>
<div class="mm" style="left:40.9px;top:49px;width:8.5px;background:#d8d8d0"></div>
<div class="mm" style="left:30.4px;top:51px;width:4.8px;background:#66d9ef"></div>
<div class="mm" style="left:35.1px;top:51px;width:0.9px;background:#d8d8d0"></div>
<div class="mm" style="left:36.1px;top:51px;width:19.9px;background:#e6db74"></div>
<div class="mm" style="left:41.8px;top:51px;width:1.9px;background:#d8d8d0"></div>
<div class="mm" style="left:26.6px;top:55px;width:1.9px;background:#d8d8d0"></div>
<div class="mm" style="left:22.8px;top:57px;width:2.8px;background:#d8d8d0"></div>
<div class="mm" style="left:15.2px;top:59px;width:0.9px;background:#d8d8d0"></div>
<div class="mm" style="left:11.4px;top:61px;width:0.9px;background:#d8d8d0"></div></div>
<div id="sbtrack"></div>
<div id="sbthumb"></div>
<div id="find">
</div>
<div class="fb" style="left:4px;top:680px;width:72px"><div class="cell" style="left:0;width:24px"></div><div class="cell" style="left:23px;width:24px"></div></div>
<div class="fb" style="left:80px;top:680px;width:72px"><div class="cell" style="left:0;width:24px"></div><div class="cell on" style="left:23px;width:25px"></div></div>
<div class="fb" style="left:156px;top:680px;width:24px;background:#313131"></div>
<svg style="left:0;top:676px" width="190" height="30" viewBox="0 0 190 30">
 <g fill="#fff">
  <rect x="12.8" y="16.5" width="2.4" height="2.4"/>
  <text x="15.5" y="18" font-family="Liberation Sans" font-size="11" font-weight="bold">*</text>
  <text x="32.5" y="18.7" font-family="Liberation Sans" font-size="11.5" font-weight="bold">Aa</text>
  <text x="56" y="20.5" font-family="Liberation Serif" font-size="14" font-weight="bold">“ ”</text>
 </g>
 <g fill="none" stroke="#fff">
  <path d="M88.2 12.5 V18 C88.2 19.8 89.2 20.6 91 20.6 H93.5 C95.3 20.6 96.2 19.8 96.2 18 V11" stroke-width="2.5"/>
  <path d="M111.5 11 H117.5 C119.6 11 120.6 12 120.6 14 V17.6 C120.6 19.6 119.6 20.6 117.5 20.6 H113.5 C111.6 20.6 110.6 19.6 110.6 17.6 V16.5" stroke-width="2.5"/>
  <path d="M135.5 10 H140.3 V13.5" stroke-width="1.6"/>
  <path d="M134 15.6 H146.4" stroke-width="2.6"/>
  <rect x="161.6" y="9.8" width="13" height="11.3" rx="3" stroke-width="1.3"/>
 </g>
 <path d="M92.8 12.6 L96.2 8.6 L99.6 12.6 Z" fill="#fff"/>
 <path d="M108 11 L112.2 7.6 L112.2 14.4 Z" fill="#fff"/>
</svg>
<div id="input"><span class="q">EVform</span></div>
<div class="fbt" style="left:1093px;width:87px">Find</div>
<div class="fbt" style="left:1184px;width:87px">Find Prev</div>
<div class="fbt" style="left:1275px;width:87px">Find All</div>
<div id="status"><span style="left:4px">28 lines, 1265 characters selected</span><span style="left:1180px">Spaces: 4</span><span style="left:1287px">JavaScript</span></div>
<div id="task">
<div class="tb" style="left:141px;width:58px"></div>
<div class="tb" style="left:203px;width:58px"></div>
<div class="tb act" style="left:265px;width:58px"></div>
<div class="tb" style="left:327px;width:58px"></div>
<div class="tb" style="left:389px;width:58px"></div>
<svg style="left:31px;top:4px" width="30" height="34" viewBox="0 0 30 34"><path d="M15 0.5 L28.5 8.3 V25.7 L15 33.5 L1.5 25.7 V8.3 Z" fill="#2b2a30" stroke="#1e1e22"/><g fill="none" stroke="#1db5d3" stroke-width="1.7"><path d="M3.6 21.2 V15.2 C3.6 12.7 5 11.8 6.7 11.8 C8.4 11.8 9.8 12.7 9.8 15.2 V21.2"/><circle cx="15.6" cy="16.4" r="4.3"/><path d="M20.6 11.9 C23.2 14.2 23.2 18.6 20.6 20.9 M26.6 11.9 C24 14.2 24 18.6 26.6 20.9"/></g></svg>
<g></g>
<svg style="left:93px;top:6px" width="30" height="30" viewBox="0 0 30 30">
 <path d="M3.01 6.84 A14.5 14.5 0 0 1 28.06 8.7 L15 8.7 A6.3 6.3 0 0 0 9.54 18.15 Z" fill="#db4437"/>
 <path d="M28.06 8.7 A14.5 14.5 0 0 1 13.93 29.46 L20.46 18.15 A6.3 6.3 0 0 0 15 8.7 Z" fill="#fcc934"/>
 <path d="M13.93 29.46 A14.5 14.5 0 0 1 3.01 6.84 L9.54 18.15 A6.3 6.3 0 0 0 20.46 18.15 Z" fill="#1ea362"/>
 <circle cx="15" cy="15" r="6.4" fill="#fff"/><circle cx="15" cy="15" r="5.1" fill="#4a8af4"/>
</svg>
<svg style="left:403px;top:6px" width="30" height="30" viewBox="0 0 30 30">
 <path d="M3.01 6.84 A14.5 14.5 0 0 1 28.06 8.7 L15 8.7 A6.3 6.3 0 0 0 9.54 18.15 Z" fill="#db4437"/>
 <path d="M28.06 8.7 A14.5 14.5 0 0 1 13.93 29.46 L20.46 18.15 A6.3 6.3 0 0 0 15 8.7 Z" fill="#fcc934"/>
 <path d="M13.93 29.46 A14.5 14.5 0 0 1 3.01 6.84 L9.54 18.15 A6.3 6.3 0 0 0 20.46 18.15 Z" fill="#1ea362"/>
 <circle cx="15" cy="15" r="6.4" fill="#fff"/><circle cx="15" cy="15" r="5.1" fill="#4a8af4"/>
</svg>
<svg style="left:155px;top:7px" width="32" height="30" viewBox="0 0 32 30">
 <path d="M1 3 H11 L13 5 H30 V28 H1 Z" fill="#dcb85a"/>
 <rect x="4" y="1.5" width="9" height="4" fill="#fff"/><rect x="5" y="2" width="3" height="2" fill="#2ab24a"/>
 <rect x="12" y="3.5" width="9" height="4" fill="#fff"/><rect x="13" y="4" width="3" height="2" fill="#e23b2e"/>
 <rect x="20" y="5.5" width="9" height="4" fill="#fff"/><rect x="21" y="6" width="3" height="2" fill="#2c8fe0"/>
 <path d="M1 9 H30 V27 H1 Z" fill="#f5dd93"/>
 <path d="M1 9 H30 V14 H1 Z" fill="#f9e7ad"/>
 <path d="M5 20 C5 18 6.5 17 9 17 H22 C24.5 17 26 18 26 20 V29 H21.5 V23 H9.5 V29 H5 Z" fill="#8fd0f5" stroke="#4ea4dc" stroke-width="1"/>
</svg>
<svg style="left:215px;top:4px" width="34" height="34" viewBox="0 0 34 34">
 <defs><linearGradient id="fzg" x1="0" y1="0" x2="0" y2="1"><stop offset="0" stop-color="#d20303"/><stop offset="1" stop-color="#9c0000"/></linearGradient></defs>
 <rect x="1.3" y="1.3" width="31.4" height="31.4" fill="url(#fzg)" stroke="#b00000" stroke-width="1.6" stroke-dasharray="1.4 1.2"/>
 <path d="M12.5 6.5 H26 L25 11 H17 L16.1 15 H23 L22.1 19 H15.2 L13.2 28.5 H7.8 Z" fill="#fff"/>
 <path d="M17.5 16.5 H29.5 L28.8 20 L21.8 25 H28 L27.2 28.5 H14.8 L15.5 25 L22.5 20 H16.8 Z" fill="#fff"/>
</svg>
<svg style="left:277px;top:4px" width="34" height="32" viewBox="0 0 34 32">
 <defs><linearGradient id="stg" x1="0" y1="0" x2="0" y2="1"><stop offset="0" stop-color="#5e5e5e"/><stop offset="1" stop-color="#383838"/></linearGradient></defs>
 <rect x="2" y="4" width="30" height="25.5" rx="3" fill="#f6f6f6" stroke="#c9c9c9" stroke-width=".8"/>
 <rect x="4.5" y="2" width="25" height="23.5" rx="2.5" fill="url(#stg)"/>
 <rect x="4.5" y="20.5" width="25" height="5" rx="1.5" fill="#1a1a1a"/>
 <path d="M20.8 8.2 C18.6 7 14.2 7.2 14.2 10 C14.2 13 20.6 12.4 20.6 15.4 C20.6 18.2 16.2 18.3 13.8 17" stroke="#f7931e" stroke-width="2.2" fill="none"/>
</svg>
<svg style="left:340px;top:5px" width="32" height="32" viewBox="0 0 32 32">
 <rect x="0.5" y="0.5" width="31" height="31" rx="4" fill="#f57a21"/>
 <rect x="3" y="1.5" width="26" height="3" rx="1.5" fill="#fbb07a" opacity=".7"/>
 <g fill="#fff"><circle cx="10" cy="12" r="6.2"/><circle cx="22.5" cy="12" r="6.2"/><circle cx="10" cy="20.5" r="6.2"/><circle cx="22.5" cy="20.5" r="6.2"/></g>
 <g fill="none" stroke="#f57a21" stroke-width="3" stroke-linecap="round"><path d="M22.2 12 V20.5 M10.3 15.6 H22.2 M10.3 15.6 V20.8"/></g>
 <circle cx="10.4" cy="11.9" r="1.8" fill="#f57a21"/>
</svg>
<svg style="left:1111px;top:12px" width="31" height="19" viewBox="0 0 31 19">
 <rect x="0.8" y="0.8" width="29.4" height="17.4" rx="1.5" fill="none" stroke="#fff" stroke-width="1.6"/>
 <g fill="#fff">
  <rect x="4" y="4" width="3" height="2.2"/><rect x="8.5" y="4" width="3" height="2.2"/><rect x="13" y="4" width="3" height="2.2"/><rect x="17.5" y="4" width="3" height="2.2"/><rect x="22" y="4" width="3" height="2.2"/>
  <rect x="4" y="8" width="3" height="2.2"/><rect x="8.5" y="8" width="3" height="2.2"/><rect x="13" y="8" width="3" height="2.2"/><rect x="17.5" y="8" width="3" height="2.2"/><rect x="22" y="8" width="3" height="2.2"/>
  <rect x="6" y="12" width="18" height="2.5"/>
 </g>
</svg>
<svg style="left:1155px;top:19px" width="9" height="6" viewBox="0 0 9 6"><path d="M0 6 L4.5 0 L9 6 Z" fill="#fff"/></svg>
<svg style="left:1176px;top:13px" width="18" height="16" viewBox="0 0 18 16">
 <path d="M4 1 L8 3.5 L4 6 L0 3.5 Z M12 1 L16 3.5 L12 6 L8 3.5 Z M4 6 L8 8.5 L4 11 L0 8.5 Z M12 6 L16 8.5 L12 11 L8 8.5 Z M4 12 L8 9.8 L12 12 L8 14.5 Z" fill="none" stroke="#fff" stroke-width="1.3"/>
 <circle cx="13" cy="11.5" r="4" fill="#2fa52f"/><path d="M11 11.5 L12.6 13 L15.2 10" stroke="#fff" stroke-width="1.2" fill="none"/>
</svg>
<svg style="left:1200px;top:15px" width="16" height="12" viewBox="0 0 16 12"><g fill="#fff"><rect x="0" y="9" width="2" height="2.5"/><rect x="3.5" y="7" width="2" height="4.5"/><rect x="7" y="5" width="2" height="6.5"/><rect x="10.5" y="3" width="2" height="8.5"/><rect x="14" y="0.5" width="2" height="11"/></g></svg>
<svg style="left:1224px;top:13px" width="16" height="16" viewBox="0 0 16 16"><g fill="none" stroke="#fff" stroke-width="1.4"><path d="M2 1 V4 M5 1 V4 M1 4 H6 V8 H1 Z M3.5 8 V15"/><rect x="9" y="2.5" width="6" height="12.5" rx="0.8"/><path d="M10.5 1.5 H13.5"/></g><rect x="10.5" y="5" width="3" height="8.5" fill="#fff"/></svg>
<div class="tray" style="left:1255px;top:15px;font-size:11.5px;letter-spacing:-0.3px">ENG</div>
<div class="tray" style="left:1307px;top:7px;font-size:12px">9:26</div>
<div class="tray" style="left:1291px;top:24px;font-size:12px">3/10/2559</div>

</div>
</body></html>
